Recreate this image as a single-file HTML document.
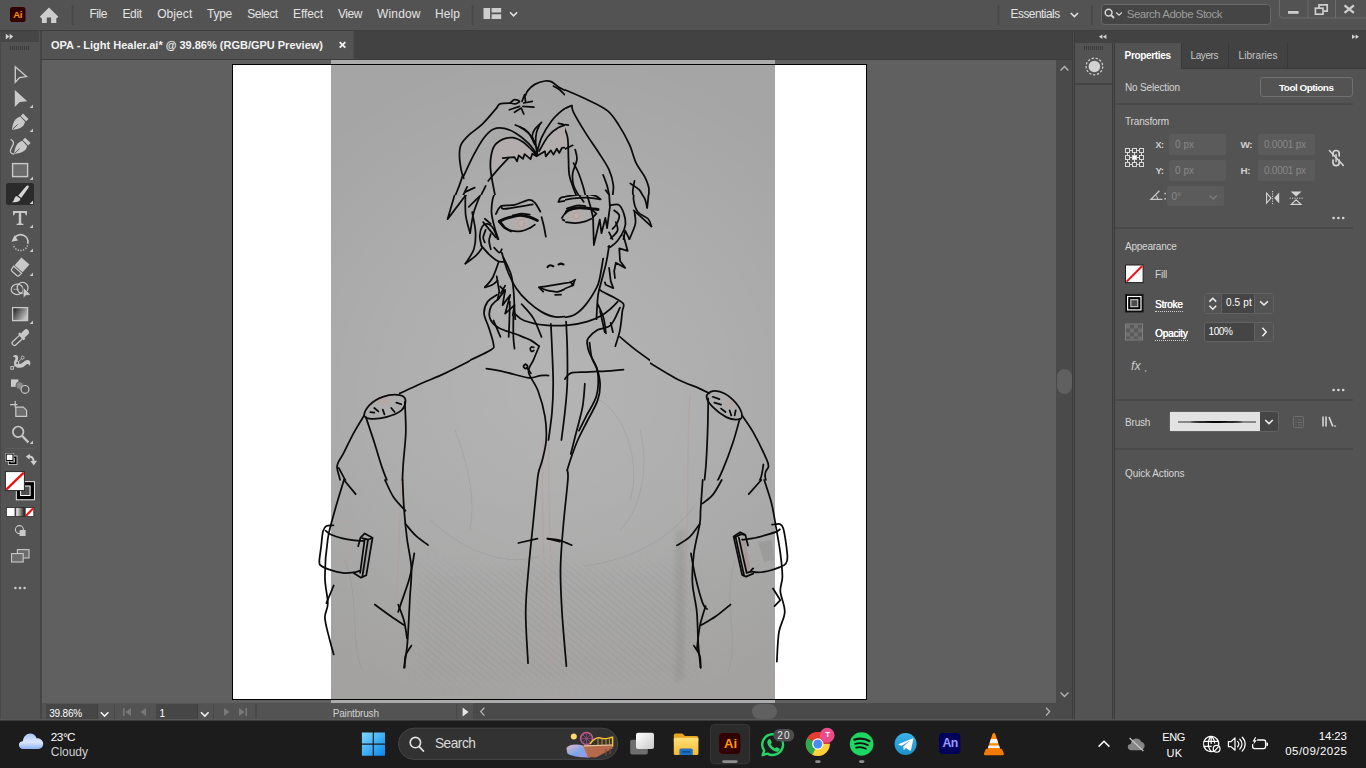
<!DOCTYPE html>
<html lang="en">
<head>
<meta charset="utf-8">
<title>OPA - Light Healer.ai</title>
<style>
*{box-sizing:border-box;margin:0;padding:0}
html,body{width:1366px;height:768px;overflow:hidden;background:#535353}
body{position:relative;font-family:"Liberation Sans",sans-serif;font-size:12px;color:#dcdcdc}
.abs,.b{position:absolute}
.t{position:absolute;z-index:3;white-space:pre;font-family:"Liberation Sans",sans-serif}
svg{position:absolute;left:0;top:0;overflow:visible;z-index:2}
#menubar{left:0;top:0;width:1366px;height:30px;background:#535353}
#menuline{left:0;top:30px;width:1366px;height:1px;background:#3e3e3e}
#tabbar{left:42px;top:31px;width:1032px;height:28px;background:#424242}
#tab{left:42px;top:31px;width:312px;height:28px;background:#535353;border-right:1px solid #4c4c4c}
#tabline{left:40px;top:59px;width:1034px;height:1px;background:#3c3c3c}
#canvas{left:42px;top:60px;width:1014px;height:643px;background:#606060;overflow:hidden}
#lefttool{left:0;top:31px;width:40px;height:689px;background:#535353;border-left:1px solid #484848}
#lefthead{left:1px;top:31px;width:38px;height:11px;background:#464646}
#leftsep{left:40px;top:31px;width:2px;height:689px;background:#454545}
#vscroll{left:1056px;top:60px;width:16px;height:643px;background:#4a4a4a}
#vthumb{left:1057px;top:369px;width:15px;height:25px;background:#606060;border-radius:7.5px}
#hbar{left:42px;top:703px;width:1032px;height:17px;background:#4a4a4a}
#hthumb{left:752px;top:704px;width:25px;height:15px;background:#606060;border-radius:7.5px}
#rdocksep{left:1072px;top:31px;width:3px;height:689px;background:#4e4e4e;border-left:1px solid #3b3b3b;border-right:1px solid #3b3b3b}
#rhead{left:1075px;top:31px;width:291px;height:12px;background:#424242}
#iconcol{left:1075px;top:43px;width:37px;height:677px;background:#535353}
#iconcell{left:1075px;top:83px;width:37px;height:2px;background:#434343}
#iconsep{left:1112px;top:43px;width:3px;height:677px;background:#4e4e4e;border-left:1px solid #3b3b3b;border-right:1px solid #3b3b3b}
#panel{left:1115px;top:43px;width:251px;height:677px;background:#535353}
#ptabs{left:1182px;top:43px;width:184px;height:26px;background:#424242;border-bottom:1px solid #3a3a3a}
.ptab{top:43px;height:25px;background:#424242;border-right:1px solid #383838}
.sep{left:1115px;width:238px;height:2px;background:#4a4a4a}
.inp{background:#5b5b5b;border-radius:2px}
.dk{background:#454545;border:1px solid #626262}
#taskbar{left:0;top:720px;width:1366px;height:48px;background:#1c1c1c;border-top:1px solid #3b3b3b}
#botline{left:0;top:719px;width:1366px;height:1px;background:#585858}
</style>
</head>
<body>
<div id="menubar" class="abs"></div>
<div id="menuline" class="abs"></div>
<div id="tabbar" class="abs"></div>
<div id="tab" class="abs"></div>
<div id="tabline" class="abs"></div>
<div id="canvas" class="abs">
<svg width="1366" height="768" viewBox="0 0 1366 768" style="left:-42px;top:-60px;z-index:0">
<defs><linearGradient id="ph" x1="0" y1="0" x2="0" y2="1"><stop offset="0" stop-color="#a5a5a6"/><stop offset="0.6" stop-color="#a5a5a5"/><stop offset="1" stop-color="#a3a2a1"/></linearGradient><radialGradient id="hl" gradientUnits="userSpaceOnUse" cx="555" cy="390" r="340"><stop offset="0" stop-color="#fff" stop-opacity="0.17"/><stop offset="0.5" stop-color="#fff" stop-opacity="0.10"/><stop offset="1" stop-color="#fff" stop-opacity="0"/></radialGradient></defs>
<rect x="232.5" y="64.5" width="634" height="635" fill="#fff" stroke="#000" stroke-width="1"/>
<rect x="331" y="60" width="444" height="643" fill="#ababab"/>
<rect x="331" y="65" width="444" height="634" fill="url(#ph)"/>
<rect x="331" y="65" width="444" height="634" fill="url(#hl)"/>
<rect x="331" y="64" width="444" height="1" fill="#000"/><rect x="331" y="699" width="444" height="1" fill="#000"/>
<defs><pattern id="hat" width="5" height="5" patternUnits="userSpaceOnUse" patternTransform="rotate(40)"><rect width="5" height="5" fill="none"/><path d="M0 2.5H5" stroke="#7e7e7e" stroke-width="0.7"/></pattern></defs>
<defs><filter id="bl2" x="-100%" y="-10%" width="300%" height="120%"><feGaussianBlur stdDeviation="2.2"/></filter><filter id="bl" x="-20%" y="-20%" width="140%" height="140%"><feGaussianBlur stdDeviation="9"/></filter><mask id="hm" maskUnits="userSpaceOnUse" x="331" y="480" width="444" height="223"><path d="M420 565C470 575 520 572 548 560C600 574 660 572 690 560L688 680L420 680Z" fill="#fff" filter="url(#bl)"/></mask></defs>
<g mask="url(#hm)"><rect x="331" y="500" width="444" height="200" fill="#808080" opacity="0.04"/><rect x="331" y="500" width="444" height="200" fill="url(#hat)" opacity="0.30"/></g>
<path d="M676 530C674 580 677 640 675 680L684 680C686 640 684 580 686 530Z" fill="#7c7c7c" opacity="0.22" filter="url(#bl2)"/>
<g transform="translate(440,70) scale(0.169271)" fill="#c4b2b2" opacity="0.38">
<path d="M300 600L300 520L320 450L370 410L430 400L490 425L540 470L565 500L535 527L500 497L490 525L465 505L455 540L440 515L405 520L340 590Z"/>
<path d="M585 480L640 390L700 340L745 330L760 400L762 455L720 460L705 490L690 465L670 500L655 475L625 510L620 480Z"/>
</g>
<path d="M758 542L772 540L774 560L764 562Z" fill="#8d8d8d" opacity="0.45"/><path d="M741.5 540L745 539.5L751 571L747 572Z" fill="#a08d88" opacity="0.5"/><path d="M367.5 540L371 540.5L365 573L361.5 572Z" fill="#8d8d8d" opacity="0.4"/>
<path d="M332 521.5C338 520 344 520 349 521L347.5 561C342 562 337 562 332 560.5" fill="none" stroke="#b8a3a1" stroke-width="1.3" opacity="0.5"/>
<circle cx="521.3" cy="223.2" r="6.8" fill="#b8acab"/><circle cx="521.3" cy="223.2" r="3.4" fill="#bdb0ae" stroke="#ab9f9e" stroke-width="0.8"/>
<circle cx="576.2" cy="215.6" r="6.5" fill="#b8acab"/><circle cx="576.2" cy="215.6" r="3.2" fill="#bdb0ae" stroke="#ab9f9e" stroke-width="0.8"/>
<ellipse cx="382.8" cy="400.4" rx="6.4" ry="5" fill="#b5a9a8"/><ellipse cx="730.4" cy="403.4" rx="5.4" ry="5.6" fill="#b5a9a8"/>
<g fill="none" stroke="#b59d98" stroke-width="1.3" opacity="0.5"><path d="M543 440C541 520 545 600 550 665M549 440C548 520 552 600 556 665"/><path d="M690 395C686 450 690 520 684 600"/><path d="M402 470C398 520 400 560 396 600"/></g>
<g fill="none" stroke="#8c8c8c" stroke-width="0.9" opacity="0.35"><path d="M430 520C470 556 510 566 540 556"/><path d="M585 566C630 560 670 540 695 505"/><path d="M455 430C470 470 475 500 470 530"/><path d="M640 430C650 470 640 510 620 530"/><path d="M345 560C360 600 350 640 362 670"/><path d="M735 560C722 600 740 640 728 672"/><path d="M600 400C630 420 640 470 630 500"/></g>
<g fill="none" stroke="#0b0b0b" stroke-width="1.75" stroke-linecap="round" stroke-linejoin="round">
<clipPath id="cp0"><rect x="430" y="60" width="135" height="135"/></clipPath>
<g clip-path="url(#cp0)">
<g transform="translate(440,70) scale(0.169271)">
<path vector-effect="non-scaling-stroke" d="M505.0 150.0C507.5 145.0 510.8 130.8 520.0 120.0C529.2 109.2 543.3 94.2 560.0 85.0C576.7 75.8 603.3 67.5 620.0 65.0C636.7 62.5 646.7 64.2 660.0 70.0C673.3 75.8 682.0 89.2 700.0 100.0C718.0 110.8 756.7 129.2 768.0 135.0"/>
<path vector-effect="non-scaling-stroke" d="M670.0 95.0C675.8 98.3 694.2 106.7 705.0 115.0C715.8 123.3 730.0 140.0 735.0 145.0"/>
<path vector-effect="non-scaling-stroke" d="M420.0 195.0C409.2 195.8 370.0 194.2 355.0 200.0C340.0 205.8 347.5 210.0 330.0 230.0C312.5 250.0 276.7 294.2 250.0 320.0C223.3 345.8 190.8 365.0 170.0 385.0C149.2 405.0 134.2 420.8 125.0 440.0C115.8 459.2 115.0 475.0 115.0 500.0C115.0 525.0 120.8 566.7 125.0 590.0C129.2 613.3 137.5 631.7 140.0 640.0"/>
<path vector-effect="non-scaling-stroke" d="M135.0 620.0C131.7 630.0 121.7 661.7 115.0 680.0C108.3 698.3 100.8 715.3 95.0 730.0C89.2 744.7 82.5 761.7 80.0 768.0"/>
<path vector-effect="non-scaling-stroke" d="M140.0 625.0C150.0 604.2 180.0 537.5 200.0 500.0C220.0 462.5 240.8 425.0 260.0 400.0C279.2 375.0 295.0 359.2 315.0 350.0C335.0 340.8 357.5 340.8 380.0 345.0C402.5 349.2 426.7 360.8 450.0 375.0C473.3 389.2 501.7 412.5 520.0 430.0C538.3 447.5 551.7 467.5 560.0 480.0C568.3 492.5 568.3 500.8 570.0 505.0"/>
<path vector-effect="non-scaling-stroke" d="M325.0 740.0C320.8 716.7 304.2 636.7 300.0 600.0C295.8 563.3 296.7 545.0 300.0 520.0C303.3 495.0 308.3 468.3 320.0 450.0C331.7 431.7 351.7 418.3 370.0 410.0C388.3 401.7 410.0 397.5 430.0 400.0C450.0 402.5 471.7 413.3 490.0 425.0C508.3 436.7 527.5 457.5 540.0 470.0C552.5 482.5 560.8 495.0 565.0 500.0"/>
<path vector-effect="non-scaling-stroke" d="M285.0 655.0C294.2 644.2 320.0 612.5 340.0 590.0C360.0 567.5 394.2 531.7 405.0 520.0"/>
<path vector-effect="non-scaling-stroke" d="M270.0 685.0C266.7 691.7 256.7 711.2 250.0 725.0C243.3 738.8 233.3 760.8 230.0 768.0"/>
<path vector-effect="non-scaling-stroke" d="M370.0 520.0 L440.0 515.0 L455.0 540.0 L465.0 505.0 L490.0 525.0 L500.0 497.0 L535.0 527.0 L545.0 495.0 L570.0 510.0 L620.0 480.0 L625.0 510.0 L655.0 475.0 L670.0 500.0 L690.0 465.0 L705.0 490.0 L720.0 460.0 L768.0 455.0"/>
<path vector-effect="non-scaling-stroke" d="M485.0 185.0 L500.0 145.0 L505.0 185.0"/>
<path vector-effect="non-scaling-stroke" d="M410.0 235.0 L470.0 215.0"/>
<path vector-effect="non-scaling-stroke" d="M440.0 250.0 L480.0 225.0 L495.0 260.0"/>
<path vector-effect="non-scaling-stroke" d="M490.0 215.0 L555.0 220.0"/>
<path vector-effect="non-scaling-stroke" d="M495.0 195.0 L545.0 185.0"/>
<path vector-effect="non-scaling-stroke" d="M415.0 195.0C419.2 191.7 430.8 176.7 440.0 175.0C449.2 173.3 469.2 180.8 470.0 185.0C470.8 189.2 454.2 198.3 445.0 200.0C435.8 201.7 420.0 195.8 415.0 195.0"/>
<path vector-effect="non-scaling-stroke" d="M445.0 325.0C454.2 329.2 483.3 337.5 500.0 350.0C516.7 362.5 532.5 380.0 545.0 400.0C557.5 420.0 570.0 458.3 575.0 470.0"/>
<path vector-effect="non-scaling-stroke" d="M470.0 335.0C479.2 341.7 510.0 357.5 525.0 375.0C540.0 392.5 554.2 429.2 560.0 440.0"/>
<path vector-effect="non-scaling-stroke" d="M600.0 310.0C593.3 316.7 569.2 336.7 560.0 350.0C550.8 363.3 545.8 378.3 545.0 390.0C544.2 401.7 553.3 415.0 555.0 420.0"/>
<path vector-effect="non-scaling-stroke" d="M590.0 320.0C586.7 328.3 574.2 351.7 570.0 370.0C565.8 388.3 564.2 408.3 565.0 430.0C565.8 451.7 573.3 488.3 575.0 500.0"/>
<path vector-effect="non-scaling-stroke" d="M570.0 500.0C575.0 483.3 585.0 433.3 600.0 400.0C615.0 366.7 640.0 326.7 660.0 300.0C680.0 273.3 702.0 255.0 720.0 240.0C738.0 225.0 760.0 215.0 768.0 210.0"/>
<path vector-effect="non-scaling-stroke" d="M585.0 480.0C594.2 465.0 620.8 413.3 640.0 390.0C659.2 366.7 680.0 351.7 700.0 340.0C720.0 328.3 750.0 323.3 760.0 320.0"/>
<path vector-effect="non-scaling-stroke" d="M700.0 315.0C705.0 316.2 722.5 319.5 730.0 322.0C737.5 324.5 742.5 328.7 745.0 330.0"/>
<path vector-effect="non-scaling-stroke" d="M160.0 690.0 L125.0 768.0"/>
<path vector-effect="non-scaling-stroke" d="M150.0 720.0 L205.0 695.0"/>
</g></g>
<clipPath id="cp1"><rect x="565" y="60" width="140" height="135"/></clipPath>
<g clip-path="url(#cp1)">
<g transform="translate(560,70) scale(0.169271)">
<path vector-effect="non-scaling-stroke" d="M0.0 105.0C25.0 115.8 103.3 147.5 150.0 170.0C196.7 192.5 246.7 213.3 280.0 240.0C313.3 266.7 328.3 296.7 350.0 330.0C371.7 363.3 393.3 403.3 410.0 440.0C426.7 476.7 435.0 518.3 450.0 550.0C465.0 581.7 487.5 605.0 500.0 630.0C512.5 655.0 521.7 677.0 525.0 700.0C528.3 723.0 520.8 756.7 520.0 768.0"/>
<path vector-effect="non-scaling-stroke" d="M0.0 115.0 L25.0 140.0"/>
<path vector-effect="non-scaling-stroke" d="M0.0 240.0C6.7 237.0 28.3 227.0 40.0 222.0C51.7 217.0 65.0 212.0 70.0 210.0"/>
<path vector-effect="non-scaling-stroke" d="M70.0 210.0C71.7 216.7 66.7 223.3 80.0 250.0C93.3 276.7 125.0 330.0 150.0 370.0C175.0 410.0 206.7 453.3 230.0 490.0C253.3 526.7 275.8 558.3 290.0 590.0C304.2 621.7 311.7 653.3 315.0 680.0C318.3 706.7 310.8 738.3 310.0 750.0"/>
<path vector-effect="non-scaling-stroke" d="M0.0 320.0 L50.0 325.0"/>
<path vector-effect="non-scaling-stroke" d="M20.0 330.0C24.2 341.7 40.0 368.3 45.0 400.0C50.0 431.7 48.3 483.3 50.0 520.0C51.7 556.7 50.0 590.0 55.0 620.0C60.0 650.0 72.5 678.3 80.0 700.0C87.5 721.7 96.7 741.7 100.0 750.0"/>
<path vector-effect="non-scaling-stroke" d="M0.0 480.0 L75.0 445.0"/>
<path vector-effect="non-scaling-stroke" d="M90.0 470.0C91.7 480.0 102.5 506.7 100.0 530.0C97.5 553.3 78.3 585.0 75.0 610.0C71.7 635.0 74.2 658.3 80.0 680.0C85.8 701.7 105.0 730.0 110.0 740.0"/>
<path vector-effect="non-scaling-stroke" d="M80.0 550.0C85.0 560.0 100.0 585.0 110.0 610.0C120.0 635.0 132.5 673.7 140.0 700.0C147.5 726.3 152.5 756.7 155.0 768.0"/>
<path vector-effect="non-scaling-stroke" d="M255.0 620.0C259.2 631.7 273.3 665.3 280.0 690.0C286.7 714.7 292.5 755.0 295.0 768.0"/>
<path vector-effect="non-scaling-stroke" d="M270.0 710.0 L300.0 750.0"/>
<path vector-effect="non-scaling-stroke" d="M440.0 655.0C438.3 665.8 430.0 701.2 430.0 720.0C430.0 738.8 438.3 760.0 440.0 768.0"/>
<path vector-effect="non-scaling-stroke" d="M415.0 670.0C424.2 676.7 455.8 693.7 470.0 710.0C484.2 726.3 495.0 758.3 500.0 768.0"/>
</g></g>
<clipPath id="cp2"><rect x="430" y="195" width="135" height="125"/></clipPath>
<g clip-path="url(#cp2)">
<g transform="translate(440,190) scale(0.169271)">
<path vector-effect="non-scaling-stroke" d="M95.0 0.0 L45.0 172.0 L160.0 20.0"/>
<path vector-effect="non-scaling-stroke" d="M150.0 20.0C150.3 41.7 147.3 110.8 152.0 150.0C156.7 189.2 173.7 237.5 178.0 255.0"/>
<path vector-effect="non-scaling-stroke" d="M178.0 255.0C181.7 234.2 188.0 172.5 200.0 130.0C212.0 87.5 241.7 21.7 250.0 0.0"/>
<path vector-effect="non-scaling-stroke" d="M170.0 100.0 L230.0 40.0"/>
<path vector-effect="non-scaling-stroke" d="M190.0 130.0C193.3 150.0 208.3 213.3 210.0 250.0C211.7 286.7 210.0 319.2 200.0 350.0C190.0 380.8 158.3 420.8 150.0 435.0"/>
<path vector-effect="non-scaling-stroke" d="M150.0 435.0C160.8 426.7 198.3 400.8 215.0 385.0C231.7 369.2 244.2 347.5 250.0 340.0"/>
<path vector-effect="non-scaling-stroke" d="M265.0 170.0 L300.0 200.0"/>
<path vector-effect="non-scaling-stroke" d="M255.0 190.0 L330.0 280.0"/>
<path vector-effect="non-scaling-stroke" d="M245.0 330.0C243.3 320.0 234.2 289.2 235.0 270.0C235.8 250.8 242.5 226.7 250.0 215.0C257.5 203.3 270.0 199.2 280.0 200.0C290.0 200.8 301.7 210.0 310.0 220.0C318.3 230.0 325.0 248.3 330.0 260.0C335.0 271.7 338.3 285.0 340.0 290.0"/>
<path vector-effect="non-scaling-stroke" d="M270.0 235.0C267.5 242.5 255.8 267.5 255.0 280.0C254.2 292.5 263.3 305.0 265.0 310.0"/>
<path vector-effect="non-scaling-stroke" d="M300.0 260.0C298.3 266.7 290.0 285.0 290.0 300.0C290.0 315.0 298.3 341.7 300.0 350.0"/>
<path vector-effect="non-scaling-stroke" d="M245.0 330.0C252.5 338.3 274.2 365.0 290.0 380.0C305.8 395.0 325.8 412.5 340.0 420.0C354.2 427.5 369.2 424.2 375.0 425.0"/>
<path vector-effect="non-scaling-stroke" d="M320.0 340.0C325.0 345.0 342.5 368.3 350.0 370.0C357.5 371.7 362.5 353.3 365.0 350.0"/>
<path vector-effect="non-scaling-stroke" d="M330.0 0.0C326.7 10.0 314.2 36.7 310.0 60.0C305.8 83.3 302.5 111.7 305.0 140.0C307.5 168.3 318.3 205.0 325.0 230.0C331.7 255.0 341.7 280.0 345.0 290.0"/>
<path vector-effect="non-scaling-stroke" d="M365.0 370.0C370.8 388.3 385.8 445.0 400.0 480.0C414.2 515.0 430.0 550.0 450.0 580.0C470.0 610.0 495.0 636.7 520.0 660.0C545.0 683.3 573.3 705.0 600.0 720.0C626.7 735.0 652.0 745.8 680.0 750.0C708.0 754.2 753.3 745.8 768.0 745.0"/>
<path vector-effect="non-scaling-stroke" d="M375.0 400.0C382.5 416.7 410.0 466.7 420.0 500.0C430.0 533.3 431.7 566.7 435.0 600.0C438.3 633.3 438.3 672.0 440.0 700.0C441.7 728.0 444.2 756.7 445.0 768.0"/>
<path vector-effect="non-scaling-stroke" d="M345.0 430.0C339.2 445.0 323.3 495.8 310.0 520.0C296.7 544.2 272.5 565.8 265.0 575.0"/>
<path vector-effect="non-scaling-stroke" d="M265.0 575.0C272.5 572.5 297.5 566.7 310.0 560.0C322.5 553.3 335.0 539.2 340.0 535.0"/>
<path vector-effect="non-scaling-stroke" d="M335.0 510.0 L350.0 600.0 L340.0 650.0 L385.0 590.0 L370.0 680.0 L415.0 620.0 L385.0 730.0 L440.0 680.0 L430.0 740.0"/>
<path vector-effect="non-scaling-stroke" d="M355.0 570.0 L385.0 600.0"/>
<path vector-effect="non-scaling-stroke" d="M360.0 610.0 L385.0 565.0"/>
<path vector-effect="non-scaling-stroke" d="M330.0 142.0C335.3 134.2 343.7 104.0 362.0 95.0C380.3 86.0 412.8 94.2 440.0 88.0C467.2 81.8 505.0 60.2 525.0 58.0C545.0 55.8 548.7 63.3 560.0 75.0C571.3 86.7 587.5 119.2 593.0 128.0"/>
<path vector-effect="non-scaling-stroke" d="M362.0 95.0C364.2 97.8 358.7 111.2 375.0 112.0C391.3 112.8 431.2 104.5 460.0 100.0C488.8 95.5 533.3 87.5 548.0 85.0"/>
<path vector-effect="non-scaling-stroke" stroke-width="2.9" d="M350.0 185.0C358.3 181.7 380.0 170.8 400.0 165.0C420.0 159.2 448.3 150.8 470.0 150.0C491.7 149.2 512.5 155.0 530.0 160.0C547.5 165.0 567.5 176.7 575.0 180.0"/>
<path vector-effect="non-scaling-stroke" d="M430.0 150.0C438.3 148.3 463.3 140.8 480.0 140.0C496.7 139.2 521.7 144.2 530.0 145.0"/>
<path vector-effect="non-scaling-stroke" d="M375.0 215.0C382.5 219.2 402.5 235.3 420.0 240.0C437.5 244.7 461.7 245.5 480.0 243.0C498.3 240.5 516.7 231.3 530.0 225.0C543.3 218.7 555.0 208.3 560.0 205.0"/>
<path vector-effect="non-scaling-stroke" stroke-width="2.9" d="M350.0 185.0 L375.0 215.0"/>
<path vector-effect="non-scaling-stroke" d="M380.0 225.0 L420.0 245.0"/>
<path vector-effect="non-scaling-stroke" d="M600.0 160.0C602.5 170.0 610.8 200.8 615.0 220.0C619.2 239.2 623.3 265.8 625.0 275.0"/>
<path vector-effect="non-scaling-stroke" stroke-width="2.1" d="M635.0 455.0C637.5 453.3 644.2 445.8 650.0 445.0C655.8 444.2 666.7 449.2 670.0 450.0"/>
<path vector-effect="non-scaling-stroke" stroke-width="2.1" d="M700.0 440.0C702.5 439.2 710.0 435.0 715.0 435.0C720.0 435.0 727.5 439.2 730.0 440.0"/>
<path vector-effect="non-scaling-stroke" d="M585.0 575.0C595.8 573.3 619.5 570.0 650.0 565.0C680.5 560.0 748.3 548.3 768.0 545.0"/>
<path vector-effect="non-scaling-stroke" d="M585.0 575.0 L610.0 600.0"/>
<path vector-effect="non-scaling-stroke" d="M600.0 580.0C606.7 582.5 623.3 591.7 640.0 595.0C656.7 598.3 678.7 604.2 700.0 600.0C721.3 595.8 756.7 575.0 768.0 570.0"/>
<path vector-effect="non-scaling-stroke" d="M680.0 620.0 L715.0 618.0"/>
<path vector-effect="non-scaling-stroke" d="M700.0 70.0C702.5 65.8 703.7 50.0 715.0 45.0C726.3 40.0 759.2 40.8 768.0 40.0"/>
<path vector-effect="non-scaling-stroke" d="M700.0 70.0 L768.0 60.0"/>
<path vector-effect="non-scaling-stroke" d="M720.0 165.0C724.2 159.2 737.0 137.5 745.0 130.0C753.0 122.5 764.2 121.7 768.0 120.0"/>
<path vector-effect="non-scaling-stroke" d="M725.0 175.0 L768.0 195.0"/>
</g></g>
<clipPath id="cp3"><rect x="565" y="195" width="140" height="125"/></clipPath>
<g clip-path="url(#cp3)">
<g transform="translate(560,190) scale(0.169271)">
<path vector-effect="non-scaling-stroke" d="M0.0 45.0C10.0 43.3 35.0 38.3 60.0 35.0C85.0 31.7 125.0 25.0 150.0 25.0C175.0 25.0 195.0 30.0 210.0 35.0C225.0 40.0 235.0 51.7 240.0 55.0"/>
<path vector-effect="non-scaling-stroke" d="M0.0 65.0C13.3 62.5 53.3 53.3 80.0 50.0C106.7 46.7 134.2 44.2 160.0 45.0C185.8 45.8 222.5 53.3 235.0 55.0"/>
<path vector-effect="non-scaling-stroke" stroke-width="2.9" d="M10.0 155.0C16.7 149.2 33.3 128.3 50.0 120.0C66.7 111.7 88.3 106.7 110.0 105.0C131.7 103.3 160.8 108.3 180.0 110.0C199.2 111.7 217.5 114.2 225.0 115.0"/>
<path vector-effect="non-scaling-stroke" d="M40.0 110.0C50.0 107.0 81.7 94.5 100.0 92.0C118.3 89.5 141.7 94.5 150.0 95.0"/>
<path vector-effect="non-scaling-stroke" d="M35.0 190.0C44.2 190.8 70.8 195.8 90.0 195.0C109.2 194.2 134.2 189.2 150.0 185.0C165.8 180.8 179.2 172.5 185.0 170.0"/>
<path vector-effect="non-scaling-stroke" d="M180.0 110.0 L215.0 140.0 L195.0 160.0"/>
<path vector-effect="non-scaling-stroke" d="M95.0 0.0C99.2 6.7 112.5 28.3 120.0 40.0C127.5 51.7 136.7 65.0 140.0 70.0"/>
<path vector-effect="non-scaling-stroke" d="M150.0 0.0C154.2 13.3 167.5 53.3 175.0 80.0C182.5 106.7 191.7 146.7 195.0 160.0"/>
<path vector-effect="non-scaling-stroke" d="M195.0 160.0 L200.0 325.0 L235.0 175.0 L245.0 255.0 L268.0 165.0 L278.0 225.0 L295.0 100.0 L290.0 20.0"/>
<path vector-effect="non-scaling-stroke" d="M300.0 90.0C308.3 90.0 335.8 76.7 350.0 90.0C364.2 103.3 380.0 146.7 385.0 170.0C390.0 193.3 387.5 208.3 380.0 230.0C372.5 251.7 353.3 282.5 340.0 300.0C326.7 317.5 309.2 329.2 300.0 335.0C290.8 340.8 287.5 335.0 285.0 335.0"/>
<path vector-effect="non-scaling-stroke" d="M320.0 120.0C325.0 125.0 347.5 136.7 350.0 150.0C352.5 163.3 341.7 186.7 335.0 200.0C328.3 213.3 314.2 225.0 310.0 230.0"/>
<path vector-effect="non-scaling-stroke" d="M330.0 190.0C331.7 198.3 345.0 224.2 340.0 240.0C335.0 255.8 306.7 277.5 300.0 285.0"/>
<path vector-effect="non-scaling-stroke" d="M290.0 250.0 L310.0 290.0"/>
<path vector-effect="non-scaling-stroke" d="M440.0 0.0C439.2 10.0 431.7 38.3 435.0 60.0C438.3 81.7 445.8 111.7 460.0 130.0C474.2 148.3 506.7 155.8 520.0 170.0C533.3 184.2 536.7 207.5 540.0 215.0"/>
<path vector-effect="non-scaling-stroke" d="M540.0 215.0C530.0 205.8 497.5 175.8 480.0 160.0C462.5 144.2 442.5 126.7 435.0 120.0"/>
<path vector-effect="non-scaling-stroke" d="M440.0 130.0C440.8 141.7 450.0 173.3 445.0 200.0C440.0 226.7 415.8 275.0 410.0 290.0"/>
<path vector-effect="non-scaling-stroke" d="M410.0 290.0 L385.0 240.0 L375.0 290.0"/>
<path vector-effect="non-scaling-stroke" d="M375.0 270.0 L400.0 360.0 L350.0 345.0 L355.0 420.0 L385.0 460.0 L330.0 430.0 L320.0 480.0 L325.0 520.0"/>
<path vector-effect="non-scaling-stroke" d="M290.0 460.0 L300.0 540.0 L315.0 580.0 L270.0 560.0 L265.0 545.0"/>
<path vector-effect="non-scaling-stroke" d="M465.0 0.0C470.8 8.3 491.7 32.5 500.0 50.0C508.3 67.5 512.5 95.8 515.0 105.0"/>
<path vector-effect="non-scaling-stroke" d="M525.0 0.0C524.2 10.0 521.7 42.5 520.0 60.0C518.3 77.5 515.8 97.5 515.0 105.0"/>
<path vector-effect="non-scaling-stroke" d="M255.0 405.0C251.7 424.2 241.7 490.8 235.0 520.0C228.3 549.2 229.2 553.3 215.0 580.0C200.8 606.7 172.5 653.3 150.0 680.0C127.5 706.7 105.0 727.5 80.0 740.0C55.0 752.5 13.3 752.5 0.0 755.0"/>
<path vector-effect="non-scaling-stroke" d="M290.0 330.0C287.5 345.0 281.7 388.3 275.0 420.0C268.3 451.7 258.3 486.7 250.0 520.0C241.7 553.3 230.8 578.7 225.0 620.0C219.2 661.3 216.7 743.3 215.0 768.0"/>
<path vector-effect="non-scaling-stroke" d="M0.0 555.0C10.0 553.3 45.0 549.2 60.0 545.0C75.0 540.8 85.0 532.5 90.0 530.0"/>
<path vector-effect="non-scaling-stroke" d="M65.0 545.0 L75.0 565.0 L85.0 540.0"/>
<path vector-effect="non-scaling-stroke" d="M80.0 560.0C76.7 561.7 73.3 564.2 60.0 570.0C46.7 575.8 10.0 590.8 0.0 595.0"/>
<path vector-effect="non-scaling-stroke" d="M0.0 435.0 L20.0 440.0"/>
</g></g>
<clipPath id="cp4"><rect x="470" y="288" width="180" height="183"/></clipPath>
<g clip-path="url(#cp4)">
<g transform="translate(470,290) scale(0.234375)">
<path vector-effect="non-scaling-stroke" d="M115.0 20.0C108.3 25.0 84.2 36.7 75.0 50.0C65.8 63.3 59.2 81.7 60.0 100.0C60.8 118.3 73.3 138.3 80.0 160.0C86.7 181.7 98.3 214.2 100.0 230.0C101.7 245.8 106.7 243.3 90.0 255.0C73.3 266.7 15.0 292.5 0.0 300.0"/>
<path vector-effect="non-scaling-stroke" d="M125.0 35.0C119.2 40.8 96.7 55.8 90.0 70.0C83.3 84.2 80.0 105.0 85.0 120.0C90.0 135.0 100.8 148.3 120.0 160.0C139.2 171.7 176.7 180.8 200.0 190.0C223.3 199.2 244.2 206.7 260.0 215.0C275.8 223.3 289.2 235.8 295.0 240.0"/>
<path vector-effect="non-scaling-stroke" d="M295.0 240.0C290.8 250.0 277.5 281.7 270.0 300.0C262.5 318.3 246.7 328.3 250.0 350.0C253.3 371.7 278.3 398.3 290.0 430.0C301.7 461.7 314.2 505.0 320.0 540.0C325.8 575.0 326.7 610.0 325.0 640.0C323.3 670.0 315.0 698.7 310.0 720.0C305.0 741.3 297.5 760.0 295.0 768.0"/>
<path vector-effect="non-scaling-stroke" d="M100.0 130.0 L130.0 200.0"/>
<path vector-effect="non-scaling-stroke" d="M185.0 110.0C185.0 125.0 184.2 176.7 185.0 200.0C185.8 223.3 189.2 241.7 190.0 250.0"/>
<path vector-effect="non-scaling-stroke" d="M170.0 50.0C169.7 63.3 168.8 105.0 168.0 130.0C167.2 155.0 165.5 188.3 165.0 200.0"/>
<path vector-effect="non-scaling-stroke" d="M190.0 100.0C196.7 105.0 208.3 121.7 230.0 130.0C251.7 138.3 288.3 146.7 320.0 150.0C351.7 153.3 390.0 152.5 420.0 150.0C450.0 147.5 476.7 141.7 500.0 135.0C523.3 128.3 543.3 119.2 560.0 110.0C576.7 100.8 588.3 90.0 600.0 80.0C611.7 70.0 625.0 55.0 630.0 50.0"/>
<path vector-effect="non-scaling-stroke" d="M555.0 0.0C557.5 1.7 559.2 4.2 570.0 10.0C580.8 15.8 605.8 26.7 620.0 35.0C634.2 43.3 650.0 50.8 655.0 60.0C660.0 69.2 652.5 71.7 650.0 90.0C647.5 108.3 645.0 145.0 640.0 170.0C635.0 195.0 623.3 228.3 620.0 240.0"/>
<path vector-effect="non-scaling-stroke" d="M640.0 200.0C650.0 208.3 678.7 233.3 700.0 250.0C721.3 266.7 756.7 291.7 768.0 300.0"/>
<path vector-effect="non-scaling-stroke" d="M70.0 335.0C83.3 337.5 120.0 343.3 150.0 350.0C180.0 356.7 225.0 372.5 250.0 375.0C275.0 377.5 285.8 366.7 300.0 365.0C314.2 363.3 329.2 365.0 335.0 365.0"/>
<path vector-effect="non-scaling-stroke" d="M405.0 380.0C409.2 375.8 414.2 360.0 430.0 355.0C445.8 350.0 471.7 351.7 500.0 350.0C528.3 348.3 574.2 346.7 600.0 345.0C625.8 343.3 645.8 340.8 655.0 340.0"/>
<path vector-effect="non-scaling-stroke" d="M272.0 245.0C270.3 244.7 264.5 241.8 262.0 243.0C259.5 244.2 256.8 248.8 257.0 252.0C257.2 255.2 260.5 261.0 263.0 262.0C265.5 263.0 270.5 258.7 272.0 258.0"/>
<path vector-effect="non-scaling-stroke" d="M237.0 316.0C235.5 317.5 228.0 321.8 228.0 325.0C228.0 328.2 234.0 335.0 237.0 335.0C240.0 335.0 246.0 328.2 246.0 325.0C246.0 321.8 238.5 317.5 237.0 316.0"/>
<path vector-effect="non-scaling-stroke" d="M245.0 335.0 L260.0 355.0"/>
<path vector-effect="non-scaling-stroke" d="M345.0 145.0C345.8 162.5 348.3 207.5 350.0 250.0C351.7 292.5 355.0 355.0 355.0 400.0C355.0 445.0 353.3 480.0 350.0 520.0C346.7 560.0 337.5 620.0 335.0 640.0"/>
<path vector-effect="non-scaling-stroke" d="M410.0 135.0C410.8 154.2 414.2 205.8 415.0 250.0C415.8 294.2 416.7 355.0 415.0 400.0C413.3 445.0 409.2 480.0 405.0 520.0C400.8 560.0 392.5 620.0 390.0 640.0"/>
<path vector-effect="non-scaling-stroke" d="M640.0 75.0C633.3 87.5 615.8 134.2 600.0 150.0C584.2 165.8 560.8 160.8 545.0 170.0C529.2 179.2 512.5 195.0 505.0 205.0C497.5 215.0 499.2 219.2 500.0 230.0C500.8 240.8 503.3 253.3 510.0 270.0C516.7 286.7 532.5 308.3 540.0 330.0C547.5 351.7 554.2 376.7 555.0 400.0C555.8 423.3 554.2 443.3 545.0 470.0C535.8 496.7 514.2 531.7 500.0 560.0C485.8 588.3 471.7 613.3 460.0 640.0C448.3 666.7 437.5 698.7 430.0 720.0C422.5 741.3 417.5 760.0 415.0 768.0"/>
<path vector-effect="non-scaling-stroke" d="M510.0 225.0C511.7 235.8 514.2 269.2 520.0 290.0C525.8 310.8 541.7 323.3 545.0 350.0C548.3 376.7 548.3 418.3 540.0 450.0C531.7 481.7 507.5 515.0 495.0 540.0C482.5 565.0 470.0 590.0 465.0 600.0"/>
<path vector-effect="non-scaling-stroke" d="M490.0 400.0C488.3 416.7 486.7 463.3 480.0 500.0C473.3 536.7 458.3 586.7 450.0 620.0C441.7 653.3 433.3 686.7 430.0 700.0"/>
<path vector-effect="non-scaling-stroke" d="M545.0 60.0C549.2 70.0 564.2 99.2 570.0 120.0C575.8 140.8 578.3 174.2 580.0 185.0"/>
<path vector-effect="non-scaling-stroke" d="M555.0 90.0 L575.0 180.0"/>
<path vector-effect="non-scaling-stroke" d="M600.0 140.0 L610.0 180.0"/>
<path vector-effect="non-scaling-stroke" d="M220.0 60.0C228.3 70.0 255.8 96.7 270.0 120.0C284.2 143.3 299.2 186.7 305.0 200.0"/>
</g></g>
<clipPath id="cp5"><rect x="300" y="280" width="170" height="200.5"/></clipPath>
<g clip-path="url(#cp5)">
<g transform="translate(310,280) scale(0.338542)">
<path vector-effect="non-scaling-stroke" d="M480.0 235.0C466.7 241.7 425.0 263.3 400.0 275.0C375.0 286.7 352.5 295.0 330.0 305.0C307.5 315.0 275.8 330.0 265.0 335.0"/>
<path vector-effect="non-scaling-stroke" d="M160.0 400.0C159.2 393.3 165.8 379.2 175.0 370.0C184.2 360.8 200.0 350.0 215.0 345.0C230.0 340.0 253.8 338.3 265.0 340.0C276.2 341.7 281.2 347.5 282.0 355.0C282.8 362.5 279.5 376.7 270.0 385.0C260.5 393.3 240.0 400.8 225.0 405.0C210.0 409.2 190.8 410.8 180.0 410.0C169.2 409.2 160.8 406.7 160.0 400.0Z"/>
<path vector-effect="non-scaling-stroke" d="M190.0 378.0 L202.0 388.0"/>
<path vector-effect="non-scaling-stroke" d="M215.0 383.0 L220.0 397.0"/>
<path vector-effect="non-scaling-stroke" d="M240.0 378.0 L250.0 390.0"/>
<path vector-effect="non-scaling-stroke" d="M255.0 362.0 L270.0 367.0"/>
<path vector-effect="non-scaling-stroke" d="M178.0 390.0 L190.0 392.0"/>
<path vector-effect="non-scaling-stroke" d="M160.0 400.0C155.0 408.3 140.0 431.7 130.0 450.0C120.0 468.3 108.3 493.3 100.0 510.0C91.7 526.7 81.7 535.0 80.0 550.0C78.3 565.0 89.2 578.3 90.0 600.0C90.8 621.7 88.3 652.0 85.0 680.0C81.7 708.0 72.5 753.3 70.0 768.0"/>
<path vector-effect="non-scaling-stroke" d="M165.0 405.0C169.2 417.5 181.7 454.2 190.0 480.0C198.3 505.8 205.8 535.0 215.0 560.0C224.2 585.0 233.3 608.3 245.0 630.0C256.7 651.7 278.3 680.0 285.0 690.0"/>
<path vector-effect="non-scaling-stroke" d="M280.0 360.0C280.5 375.0 283.8 418.3 283.0 450.0C282.2 481.7 276.7 518.3 275.0 550.0C273.3 581.7 271.3 611.7 273.0 640.0C274.7 668.3 280.5 698.7 285.0 720.0C289.5 741.3 297.5 760.0 300.0 768.0"/>
<path vector-effect="non-scaling-stroke" d="M85.0 555.0C89.2 562.5 101.2 587.2 110.0 600.0C118.8 612.8 133.3 626.7 138.0 632.0"/>
<path vector-effect="non-scaling-stroke" d="M70.0 720.0C65.0 721.7 45.8 722.0 40.0 730.0C34.2 738.0 35.8 761.7 35.0 768.0"/>
<path vector-effect="non-scaling-stroke" d="M45.0 740.0 L150.0 765.0"/>
<path vector-effect="non-scaling-stroke" d="M150.0 750.0 L175.0 745.0 L180.0 768.0"/>
</g></g>
<clipPath id="cp6"><rect x="650" y="280" width="160" height="200.5"/></clipPath>
<g clip-path="url(#cp6)">
<g transform="translate(540,280) scale(0.338542)">
<path vector-effect="non-scaling-stroke" d="M300.0 230.0C316.7 240.0 371.7 275.0 400.0 290.0C428.3 305.0 453.3 312.5 470.0 320.0C486.7 327.5 495.0 332.5 500.0 335.0"/>
<path vector-effect="non-scaling-stroke" d="M492.0 345.0C492.0 337.2 501.2 329.7 510.0 328.0C518.8 326.3 533.3 328.8 545.0 335.0C556.7 341.2 571.3 354.2 580.0 365.0C588.7 375.8 596.2 392.2 597.0 400.0C597.8 407.8 592.8 411.2 585.0 412.0C577.2 412.8 562.5 411.2 550.0 405.0C537.5 398.8 519.7 385.0 510.0 375.0C500.3 365.0 492.0 352.8 492.0 345.0Z"/>
<path vector-effect="non-scaling-stroke" d="M510.0 345.0 L530.0 352.0"/>
<path vector-effect="non-scaling-stroke" d="M515.0 362.0 L535.0 368.0"/>
<path vector-effect="non-scaling-stroke" d="M535.0 380.0 L548.0 390.0"/>
<path vector-effect="non-scaling-stroke" d="M560.0 385.0 L565.0 400.0"/>
<path vector-effect="non-scaling-stroke" d="M578.0 385.0 L575.0 400.0"/>
<path vector-effect="non-scaling-stroke" d="M597.0 400.0C602.5 408.3 618.7 430.0 630.0 450.0C641.3 470.0 657.5 503.3 665.0 520.0C672.5 536.7 675.0 540.0 675.0 550.0C675.0 560.0 662.5 558.3 665.0 580.0C667.5 601.7 684.2 648.7 690.0 680.0C695.8 711.3 698.3 753.3 700.0 768.0"/>
<path vector-effect="non-scaling-stroke" d="M660.0 545.0C658.3 552.5 657.0 575.5 650.0 590.0C643.0 604.5 623.3 625.0 618.0 632.0"/>
<path vector-effect="non-scaling-stroke" d="M497.0 350.0C496.7 366.7 496.2 416.7 495.0 450.0C493.8 483.3 492.5 518.3 490.0 550.0C487.5 581.7 483.3 611.7 480.0 640.0C476.7 668.3 472.5 698.7 470.0 720.0C467.5 741.3 465.8 760.0 465.0 768.0"/>
<path vector-effect="non-scaling-stroke" d="M590.0 410.0C586.7 421.7 578.3 455.0 570.0 480.0C561.7 505.0 550.0 536.7 540.0 560.0C530.0 583.3 520.0 603.3 510.0 620.0C500.0 636.7 485.0 653.3 480.0 660.0"/>
<path vector-effect="non-scaling-stroke" d="M700.0 720.0C702.5 722.5 711.7 727.0 715.0 735.0C718.3 743.0 719.2 762.5 720.0 768.0"/>
<path vector-effect="non-scaling-stroke" d="M580.0 750.0 L600.0 745.0 L610.0 768.0"/>
<path vector-effect="non-scaling-stroke" d="M610.0 760.0 L700.0 740.0"/>
</g></g>
<g>
<g transform="translate(300,480) scale(0.293123)">
<path vector-effect="non-scaling-stroke" d="M150.0 0.0C145.0 16.7 129.2 66.7 120.0 100.0C110.8 133.3 100.8 161.7 95.0 200.0C89.2 238.3 85.0 293.3 85.0 330.0C85.0 366.7 95.0 396.7 95.0 420.0C95.0 443.3 84.2 450.0 85.0 470.0C85.8 490.0 95.0 519.2 100.0 540.0C105.0 560.8 112.5 585.8 115.0 595.0"/>
<path vector-effect="non-scaling-stroke" d="M115.0 360.0 L90.0 420.0"/>
<path vector-effect="non-scaling-stroke" d="M114.0 155.0C110.0 155.3 95.9 153.7 90.0 157.0C84.1 160.3 81.5 163.2 78.5 175.0C75.5 186.8 74.1 211.0 72.0 228.0C69.9 245.0 66.0 266.2 66.0 277.0C66.0 287.8 66.2 287.8 72.0 292.6C77.8 297.4 88.8 301.9 101.0 306.0C113.2 310.1 131.0 315.5 145.0 317.0C159.0 318.5 175.3 316.2 185.0 315.0C194.7 313.8 200.0 310.8 203.0 310.0"/>
<path vector-effect="non-scaling-stroke" d="M87.4 172.6C90.3 174.8 95.4 181.6 105.0 186.0C114.6 190.4 131.7 196.0 145.0 199.3C158.3 202.6 172.8 204.5 185.0 206.0C197.2 207.5 212.9 207.8 218.5 208.2"/>
<path vector-effect="non-scaling-stroke" d="M198.5 226.0 L206.5 196.2 L220.7 182.4 L247.4 197.1 L226.1 325.1 L208.3 333.1 L183.0 317.1"/>
<path vector-effect="non-scaling-stroke" d="M211.9 198.0 L231.9 203.7 L246.5 198.0"/>
<path vector-effect="non-scaling-stroke" d="M231.9 203.7 L212.8 329.5"/>
<path vector-effect="non-scaling-stroke" d="M220.7 201.5 L205.2 317.1"/>
<path vector-effect="non-scaling-stroke" d="M350.0 0.0C350.8 16.7 352.5 66.7 355.0 100.0C357.5 133.3 360.8 166.7 365.0 200.0C369.2 233.3 378.3 266.7 380.0 300.0C381.7 333.3 376.7 366.7 375.0 400.0C373.3 433.3 371.7 471.7 370.0 500.0C368.3 528.3 367.5 546.7 365.0 570.0C362.5 593.3 356.7 628.3 355.0 640.0"/>
<path vector-effect="non-scaling-stroke" d="M290.0 0.0C295.0 10.0 308.3 42.5 320.0 60.0C331.7 77.5 353.3 97.5 360.0 105.0"/>
<path vector-effect="non-scaling-stroke" d="M360.0 150.0C365.8 156.7 382.2 178.0 395.0 190.0C407.8 202.0 430.0 216.7 437.0 222.0"/>
<path vector-effect="non-scaling-stroke" d="M390.0 250.0C387.5 263.3 382.5 301.7 375.0 330.0C367.5 358.3 351.7 400.0 345.0 420.0C338.3 440.0 336.7 445.0 335.0 450.0"/>
<path vector-effect="non-scaling-stroke" d="M255.0 425.0C264.2 431.7 293.3 453.3 310.0 465.0C326.7 476.7 347.5 490.0 355.0 495.0"/>
<path vector-effect="non-scaling-stroke" d="M335.0 425.0C338.3 434.2 350.0 460.8 355.0 480.0C360.0 499.2 363.3 530.0 365.0 540.0"/>
<path vector-effect="non-scaling-stroke" d="M380.0 565.0C376.7 570.8 363.8 587.5 360.0 600.0C356.2 612.5 357.5 633.3 357.0 640.0"/>
<path vector-effect="non-scaling-stroke" d="M816.0 -34.0C815.0 -28.3 813.5 -30.7 810.0 0.0C806.5 30.7 800.0 100.0 795.0 150.0C790.0 200.0 784.2 250.0 780.0 300.0C775.8 350.0 770.3 395.8 770.0 450.0C769.7 504.2 776.7 595.8 778.0 625.0"/>
<path vector-effect="non-scaling-stroke" d="M745.0 215.0 L810.0 200.0"/>
<path vector-effect="non-scaling-stroke" d="M845.0 200.0 L887.0 210.0"/>
<path vector-effect="non-scaling-stroke" d="M150.0 0.0 L190.0 48.0"/>
</g></g>
<g>
<g transform="translate(540,480) scale(0.293123)">
<path vector-effect="non-scaling-stroke" d="M93.0 -34.0C93.3 -28.3 97.2 -30.7 95.0 0.0C92.8 30.7 84.2 100.0 80.0 150.0C75.8 200.0 70.8 250.0 70.0 300.0C69.2 350.0 71.7 394.2 75.0 450.0C78.3 505.8 87.5 604.2 90.0 635.0"/>
<path vector-effect="non-scaling-stroke" d="M25.0 200.0C31.7 200.8 51.2 201.3 65.0 205.0C78.8 208.7 100.8 219.2 108.0 222.0"/>
<path vector-effect="non-scaling-stroke" d="M555.0 0.0C553.8 16.7 549.7 75.0 548.0 100.0C546.3 125.0 548.8 125.0 545.0 150.0C541.2 175.0 529.2 216.7 525.0 250.0C520.8 283.3 518.3 316.7 520.0 350.0C521.7 383.3 531.7 415.0 535.0 450.0C538.3 485.0 537.8 528.3 540.0 560.0C542.2 591.7 546.7 626.7 548.0 640.0"/>
<path vector-effect="non-scaling-stroke" d="M620.0 0.0C615.0 8.3 600.8 36.7 590.0 50.0C579.2 63.3 560.8 75.0 555.0 80.0"/>
<path vector-effect="non-scaling-stroke" d="M545.0 150.0C539.2 157.5 523.0 182.8 510.0 195.0C497.0 207.2 474.2 218.3 467.0 223.0"/>
<path vector-effect="non-scaling-stroke" d="M515.0 250.0C517.5 263.3 523.3 301.7 530.0 330.0C536.7 358.3 548.3 401.7 555.0 420.0C561.7 438.3 567.5 436.7 570.0 440.0"/>
<path vector-effect="non-scaling-stroke" d="M650.0 425.0C641.7 431.7 616.7 453.3 600.0 465.0C583.3 476.7 558.3 490.0 550.0 495.0"/>
<path vector-effect="non-scaling-stroke" d="M565.0 430.0C561.7 441.7 550.0 475.0 545.0 500.0C540.0 525.0 536.7 566.7 535.0 580.0"/>
<path vector-effect="non-scaling-stroke" d="M525.0 565.0C528.3 570.8 541.2 587.5 545.0 600.0C548.8 612.5 547.5 633.3 548.0 640.0"/>
<path vector-effect="non-scaling-stroke" d="M765.0 0.0C769.2 13.3 783.3 53.3 790.0 80.0C796.7 106.7 800.0 131.7 805.0 160.0C810.0 188.3 816.3 221.7 820.0 250.0C823.7 278.3 827.0 308.3 827.0 330.0C827.0 351.7 818.7 360.0 820.0 380.0C821.3 400.0 835.8 426.7 835.0 450.0C834.2 473.3 819.5 491.7 815.0 520.0C810.5 548.3 809.2 603.3 808.0 620.0"/>
<path vector-effect="non-scaling-stroke" d="M795.0 370.0 L820.0 410.0 L800.0 430.0"/>
<path vector-effect="non-scaling-stroke" d="M712.0 48.0 L755.0 0.0"/>
<path vector-effect="non-scaling-stroke" d="M709.5 223.7 L700.6 187.3 L682.8 178.4 L660.6 192.6 L689.5 323.7 L702.8 329.5 L727.3 319.3"/>
<path vector-effect="non-scaling-stroke" d="M667.3 194.9 L696.2 326.0"/>
<path vector-effect="non-scaling-stroke" d="M678.4 197.1 L705.0 317.1 L720.6 312.6"/>
<path vector-effect="non-scaling-stroke" d="M665.0 194.9 L687.3 184.6 L700.6 188.2"/>
<path vector-effect="non-scaling-stroke" d="M689.5 203.7C695.4 203.0 711.7 201.9 725.0 199.3C738.3 196.7 756.2 191.9 769.5 188.2C782.8 184.5 796.9 180.4 805.0 177.1C813.1 173.8 816.2 169.7 818.4 168.2"/>
<path vector-effect="non-scaling-stroke" d="M791.7 152.6C796.2 152.2 812.1 148.6 818.4 150.4C824.7 152.2 826.2 153.7 829.5 163.7C832.8 173.7 836.0 193.7 838.4 210.4C840.8 227.1 844.1 251.1 844.1 263.7C844.1 276.3 842.7 280.4 838.4 286.0C834.1 291.6 828.4 293.0 818.4 297.1C808.4 301.2 791.0 307.4 778.4 310.4C765.8 313.3 752.4 314.8 742.8 314.8C733.2 314.8 723.2 312.6 720.6 310.4C718.0 308.2 726.2 303.0 727.3 301.5"/>
</g></g>
</g>
</svg>
</div>
<div id="lefttool" class="abs"></div>
<div id="lefthead" class="abs"></div>
<div id="leftsep" class="abs"></div>
<div id="vscroll" class="abs"></div>
<div id="vthumb" class="abs"></div>
<div id="hbar" class="abs"></div>
<div id="hthumb" class="abs"></div>
<!-- status bar widgets -->
<div class="b" style="left:42px;top:703px;width:432px;height:17px;background:#535353"></div>
<div class="b" style="left:46px;top:704px;width:51px;height:16px;background:#464646"></div>
<div class="b" style="left:156px;top:704px;width:41px;height:16px;background:#464646"></div>
<div class="b" style="left:97px;top:704px;width:1px;height:16px;background:#404040"></div>
<div class="b" style="left:114px;top:704px;width:1px;height:16px;background:#484848"></div>
<div class="b" style="left:197px;top:704px;width:1px;height:16px;background:#404040"></div>
<div class="b" style="left:213px;top:704px;width:1px;height:16px;background:#484848"></div>
<div class="b" style="left:255px;top:704px;width:2px;height:16px;background:#484848"></div>
<div class="b" style="left:456px;top:704px;width:1px;height:16px;background:#484848"></div>
<div class="b" style="left:473px;top:704px;width:1px;height:16px;background:#484848"></div>
<div id="rdocksep" class="abs"></div>
<div id="rhead" class="abs"></div>
<div id="iconcol" class="abs"></div>
<div id="iconcell" class="abs"></div>
<div id="iconsep" class="abs"></div>
<div id="panel" class="abs"></div>
<div id="ptabs" class="abs"></div>
<div class="b ptab" style="left:1182px;width:47px"></div>
<div class="b ptab" style="left:1229px;width:59px"></div>
<div class="b" style="left:1181px;top:43px;width:1px;height:26px;background:#383838"></div>
<!-- panel content -->
<div class="b" style="left:1260px;top:77px;width:93px;height:20px;border:1px solid #707070;border-radius:3px"></div>
<div class="b sep" style="top:103px"></div>
<div class="b inp" style="left:1169px;top:134px;width:57px;height:21px"></div>
<div class="b inp" style="left:1169px;top:160px;width:57px;height:21px"></div>
<div class="b inp" style="left:1258px;top:134px;width:57px;height:21px"></div>
<div class="b inp" style="left:1258px;top:160px;width:57px;height:21px"></div>
<div class="b inp" style="left:1167px;top:186px;width:57px;height:20px"></div>
<div class="b sep" style="top:227px"></div>
<div class="b dk" style="left:1204px;top:293px;width:70px;height:21px;border-radius:3px"></div>
<div class="b" style="left:1205px;top:294px;width:16px;height:19px;background:#535353;border-radius:2px 0 0 2px"></div>
<div class="b" style="left:1255px;top:294px;width:18px;height:19px;background:#535353;border-radius:0 2px 2px 0"></div>
<div class="b" style="left:1221px;top:294px;width:1px;height:19px;background:#626262"></div>
<div class="b" style="left:1254px;top:294px;width:1px;height:19px;background:#626262"></div>
<div class="b dk" style="left:1204px;top:322px;width:70px;height:20px;border-radius:3px"></div>
<div class="b" style="left:1254px;top:323px;width:1px;height:18px;background:#626262"></div>
<div class="b" style="left:1255px;top:323px;width:18px;height:18px;background:#535353;border-radius:0 2px 2px 0"></div>
<div class="b sep" style="top:399px"></div>
<div class="b" style="left:1169px;top:411px;width:110px;height:21px;border:1px solid #626262;border-radius:3px;background:#454545"></div>
<div class="b" style="left:1170px;top:412px;width:90px;height:19px;background:#e2e2e2"></div>
<div class="b sep" style="top:448px"></div>
<div id="taskbar" class="abs"></div>
<div id="botline" class="abs"></div>
<div class="t" style="left:89.5px;top:8.4px;font-size:12px;line-height:12px;font-weight:400;color:#e4e4e4;letter-spacing:-0.481px;">File</div>
<div class="t" style="left:122.4px;top:8.4px;font-size:12px;line-height:12px;font-weight:400;color:#e4e4e4;letter-spacing:-0.296px;">Edit</div>
<div class="t" style="left:157.2px;top:8.4px;font-size:12px;line-height:12px;font-weight:400;color:#e4e4e4;letter-spacing:0.083px;">Object</div>
<div class="t" style="left:207.1px;top:8.4px;font-size:12px;line-height:12px;font-weight:400;color:#e4e4e4;letter-spacing:-0.272px;">Type</div>
<div class="t" style="left:247.2px;top:8.4px;font-size:12px;line-height:12px;font-weight:400;color:#e4e4e4;letter-spacing:-0.472px;">Select</div>
<div class="t" style="left:293.0px;top:8.4px;font-size:12px;line-height:12px;font-weight:400;color:#e4e4e4;letter-spacing:-0.094px;">Effect</div>
<div class="t" style="left:338.0px;top:8.4px;font-size:12px;line-height:12px;font-weight:400;color:#e4e4e4;letter-spacing:-0.432px;">View</div>
<div class="t" style="left:377.0px;top:8.4px;font-size:12px;line-height:12px;font-weight:400;color:#e4e4e4;letter-spacing:0.163px;">Window</div>
<div class="t" style="left:435.0px;top:8.4px;font-size:12px;line-height:12px;font-weight:400;color:#e4e4e4;letter-spacing:0.104px;">Help</div>
<div class="t" style="left:1010.6px;top:8.6px;font-size:11.87px;line-height:11.87px;font-weight:400;color:#e4e4e4;letter-spacing:-0.500px;">Essentials</div>
<div class="t" style="left:1126.8px;top:8.8px;font-size:11.51px;line-height:11.51px;font-weight:400;color:#9c9c9c;letter-spacing:-0.500px;">Search Adobe Stock</div>
<div class="t" style="left:51.0px;top:39.7px;font-size:11px;line-height:11px;font-weight:700;color:#f2f2f2;letter-spacing:-0.008px;">OPA - Light Healer.ai* @ 39.86% (RGB/GPU Preview)</div>
<div class="t" style="left:1124.6px;top:50.5px;font-size:10px;line-height:10px;font-weight:700;color:#ffffff;letter-spacing:-0.341px;">Properties</div>
<div class="t" style="left:1190.5px;top:50.5px;font-size:10px;line-height:10px;font-weight:400;color:#c6c6c6;letter-spacing:-0.403px;">Layers</div>
<div class="t" style="left:1238.5px;top:50.5px;font-size:10px;line-height:10px;font-weight:400;color:#c6c6c6;letter-spacing:0.080px;">Libraries</div>
<div class="t" style="left:1125.0px;top:82.5px;font-size:10px;line-height:10px;font-weight:400;color:#d6d6d6;letter-spacing:-0.155px;">No Selection</div>
<div class="t" style="left:1279.0px;top:82.6px;font-size:9.93px;line-height:9.93px;font-weight:700;color:#ffffff;letter-spacing:-0.500px;">Tool Options</div>
<div class="t" style="left:1125.0px;top:116.5px;font-size:10px;line-height:10px;font-weight:400;color:#d6d6d6;letter-spacing:-0.150px;">Transform</div>
<div class="t" style="left:1155.5px;top:140.9px;font-size:9.0px;line-height:9.0px;font-weight:700;color:#d0d0d0;letter-spacing:-0.500px;">X:</div>
<div class="t" style="left:1155.5px;top:166.3px;font-size:9.71px;line-height:9.71px;font-weight:700;color:#d0d0d0;letter-spacing:-0.500px;">Y:</div>
<div class="t" style="left:1240.5px;top:140.1px;font-size:9.93px;line-height:9.93px;font-weight:700;color:#d0d0d0;letter-spacing:-0.500px;">W:</div>
<div class="t" style="left:1240.5px;top:166.1px;font-size:9.94px;line-height:9.94px;font-weight:700;color:#d0d0d0;letter-spacing:-0.500px;">H:</div>
<div class="t" style="left:1175.0px;top:139.5px;font-size:10px;line-height:10px;font-weight:400;color:#888888;letter-spacing:0.031px;">0 px</div>
<div class="t" style="left:1175.0px;top:165.5px;font-size:10px;line-height:10px;font-weight:400;color:#888888;letter-spacing:0.031px;">0 px</div>
<div class="t" style="left:1264.0px;top:139.5px;font-size:10px;line-height:10px;font-weight:400;color:#888888;letter-spacing:-0.242px;">0.0001 px</div>
<div class="t" style="left:1264.0px;top:165.5px;font-size:10px;line-height:10px;font-weight:400;color:#888888;letter-spacing:-0.242px;">0.0001 px</div>
<div class="t" style="left:1171.4px;top:191.5px;font-size:10px;line-height:10px;font-weight:400;color:#888888;letter-spacing:0.037px;">0°</div>
<div class="t" style="left:1125.0px;top:241.5px;font-size:10px;line-height:10px;font-weight:400;color:#d6d6d6;letter-spacing:-0.238px;">Appearance</div>
<div class="t" style="left:1155.0px;top:270.0px;font-size:10px;line-height:10px;font-weight:400;color:#d6d6d6;letter-spacing:-0.160px;">Fill</div>
<div class="t" style="left:1155.0px;top:299.5px;font-size:10px;line-height:10px;font-weight:400;color:#ffffff;letter-spacing:-0.221px;border-bottom:1px dotted #d0d0d0;padding-bottom:1px;text-shadow:0.35px 0 0 #fff;">Stroke</div>
<div class="t" style="left:1155.0px;top:328.5px;font-size:10px;line-height:10px;font-weight:400;color:#ffffff;letter-spacing:-0.201px;border-bottom:1px dotted #d0d0d0;padding-bottom:1px;text-shadow:0.35px 0 0 #fff;">Opacity</div>
<div class="t" style="left:1226.0px;top:298.0px;font-size:10px;line-height:10px;font-weight:400;color:#ffffff;letter-spacing:0.134px;">0.5 pt</div>
<div class="t" style="left:1208.4px;top:327.0px;font-size:10px;line-height:10px;font-weight:400;color:#ffffff;letter-spacing:-0.326px;">100%</div>
<div class="t" style="left:1131.0px;top:359.9px;font-size:12.5px;line-height:12.5px;font-weight:400;color:#c8c8c8;letter-spacing:0.000px;font-style:italic;">fx</div>
<div class="t" style="left:1125.0px;top:417.5px;font-size:10px;line-height:10px;font-weight:400;color:#d6d6d6;letter-spacing:-0.181px;">Brush</div>
<div class="t" style="left:1125.0px;top:468.5px;font-size:10px;line-height:10px;font-weight:400;color:#d6d6d6;letter-spacing:-0.091px;">Quick Actions</div>
<div class="t" style="left:49.2px;top:709.1px;font-size:10px;line-height:10px;font-weight:400;color:#ffffff;letter-spacing:-0.184px;">39.86%</div>
<div class="t" style="left:159.5px;top:709.1px;font-size:10px;line-height:10px;font-weight:400;color:#ffffff;letter-spacing:0.000px;">1</div>
<div class="t" style="left:332.7px;top:708.9px;font-size:10px;line-height:10px;font-weight:400;color:#d0d0d0;letter-spacing:-0.168px;">Paintbrush</div>
<div class="t" style="left:50.8px;top:730.8px;font-size:11.77px;line-height:11.77px;font-weight:400;color:#ffffff;letter-spacing:-0.500px;">23°C</div>
<div class="t" style="left:50.8px;top:746.2px;font-size:12px;line-height:12px;font-weight:400;color:#cfcfcf;letter-spacing:-0.032px;">Cloudy</div>
<div class="t" style="left:434.9px;top:736.9px;font-size:13.76px;line-height:13.76px;font-weight:400;color:#dadada;letter-spacing:-0.500px;">Search</div>
<div class="t" style="left:1162.3px;top:731.7px;font-size:11px;line-height:11px;font-weight:400;color:#ffffff;letter-spacing:-0.422px;">ENG</div>
<div class="t" style="left:1166.5px;top:747.7px;font-size:11px;line-height:11px;font-weight:400;color:#ffffff;letter-spacing:0.219px;">UK</div>
<div class="t" style="left:1318.7px;top:730.6px;font-size:11.5px;line-height:11.5px;font-weight:400;color:#ffffff;letter-spacing:-0.120px;">14:23</div>
<div class="t" style="left:1285.2px;top:746.3px;font-size:11.5px;line-height:11.5px;font-weight:400;color:#ffffff;letter-spacing:0.471px;">05/09/2025</div>
<div class="t" style="left:777.3px;top:730.9px;font-size:10px;line-height:10px;font-weight:400;color:#e6e6e6;letter-spacing:1.075px;z-index:5;">20</div>
<div class="t" style="left:825.3px;top:731.0px;font-size:8px;line-height:8px;font-weight:700;color:#ffffff;letter-spacing:0.000px;z-index:5;">T</div>
<div class="t" style="left:724.1px;top:736.8px;font-size:13px;line-height:13px;font-weight:700;color:#ff9a00;letter-spacing:-0.100px;z-index:5;">Ai</div>
<div class="t" style="left:942.4px;top:737.4px;font-size:12.29px;line-height:12.29px;font-weight:700;color:#9999ff;letter-spacing:-0.500px;z-index:5;">An</div>
<div class="t" style="left:13.2px;top:9.9px;font-size:9.5px;line-height:9.5px;font-weight:700;color:#ff9a00;letter-spacing:-0.400px;z-index:5;">Ai</div>
<svg width="1366" height="768" viewBox="0 0 1366 768">
<g id="menubar-icons">
<rect x="10" y="7" width="15.5" height="15" rx="2.6" fill="#310000"/>
<path d="M49 7.4 L58.4 16.7 L56.3 18.6 L56.3 23 L51.1 23 L51.1 17.4 L46.8 17.4 L46.8 23 L41.9 23 L41.9 18.6 L39.7 16.7 Z" fill="#cdcdcd"/>
<path d="M72.5 5V25M472.5 5V25M998.5 5V25M1091.8 5V25" stroke="#474747" stroke-width="1.6"/>
<path d="M483.5 8h6.6v11h-6.6zM491.6 8h9.6v4.6h-9.6zM491.6 14.2h9.6v4.8h-9.6z" fill="#cdcdcd"/>
<path d="M510 12.3l3.6 3.6 3.6-3.6" stroke="#e0e0e0" stroke-width="1.6" fill="none"/>
<path d="M1070.8 13l3.6 3.6 3.6-3.6" stroke="#e0e0e0" stroke-width="1.6" fill="none"/>
<rect x="1101.5" y="4.5" width="169" height="20" rx="3" fill="#454545" stroke="#686868"/>
<circle cx="1108.6" cy="12.6" r="3.4" fill="none" stroke="#d4d4d4" stroke-width="1.5"/>
<path d="M1111 15l3 3" stroke="#d4d4d4" stroke-width="1.8"/>
<path d="M1116.2 12.6l2.8 2.6 2.8-2.6" stroke="#d4d4d4" stroke-width="1.3" fill="none"/>
<path d="M1279.5 0V15a3 3 0 0 0 3 3H1366M1308 0V18M1335.5 0V18" stroke="#6c6c6c" fill="none"/>
<rect x="1288" y="11" width="10.6" height="2.8" fill="#cdcdcd"/>
<path d="M1319 8V4.8h8.2v6.4H1323.5" stroke="#cdcdcd" stroke-width="1.7" fill="none"/>
<rect x="1315.4" y="8.2" width="7.6" height="6" stroke="#cdcdcd" stroke-width="1.7" fill="none"/>
<path d="M1344.5 5.3l9.4 7.6M1353.9 5.3l-9.4 7.6" stroke="#cdcdcd" stroke-width="2.3"/>
<path d="M677.3 40.6l5.6 5.6M682.9 40.6l-5.6 5.6" stroke="#f0f0f0" stroke-width="1.9" transform="translate(-337.6,1.5)"/>
</g>
<g id="dock-heads" fill="#d2d2d2">
<path d="M5.8 33.7l3.6 2.9-3.6 2.9zM9.6 33.7l3.6 2.9-3.6 2.9z"/>
<path d="M1102.4 34.4l-3.6 2.3 3.6 2.3zM1106.4 34.4l-3.6 2.3 3.6 2.3z"/>
<path d="M1352 34.4l3.4 2.3-3.4 2.3zM1355.6 34.4l3.4 2.3-3.4 2.3z"/>
<path d="M10 46v4M12 46v4M14 46v4M16 46v4M18 46v4M20 46v4M22 46v4M24 46v4M26 46v4M28 46v4" stroke="#3b3b3b" stroke-width="1" transform="translate(0.5,0)"/>
<path d="M1084 46v4M1086 46v4M1088 46v4M1090 46v4M1092 46v4M1094 46v4M1096 46v4M1098 46v4M1100 46v4M1102 46v4" stroke="#3b3b3b" stroke-width="1" transform="translate(0.5,0)"/>
<circle cx="1094.4" cy="66.5" r="5.8"/>
<circle cx="1094.4" cy="66.5" r="8.3" fill="none" stroke="#d2d2d2" stroke-width="1.2" stroke-dasharray="2.3 1.7"/>
</g>
<g id="tools" fill="#c9c9c9">
<!-- selection -->
<path d="M15.3 66.7V82.2L19.6 77.6L26.5 76.6Z" fill="none" stroke="#c9c9c9" stroke-width="1.4" stroke-linejoin="miter"/>
<!-- direct selection -->
<path d="M14.8 90V107L19.8 102.1L27.3 101.3Z"/>
<path d="M33 104.6V108H29.6Z"/>
<!-- pen -->
<g id="pen">
<path d="M12 129.8C12.3 126.4 13.2 122.2 15.4 119.6C16.8 118.2 18.6 117.2 20.2 116.6L25 121.8C24.7 123.4 23.8 125.3 22.5 126.5C19.8 128.8 15.6 129.7 12 129.8Z"/>
<path d="M12.7 129.1L17.6 124.5" stroke="#535353" stroke-width="0.9"/>
<path d="M20.7 115.9L23 113.6L28.5 119L26.1 121.3Z"/>
</g>
<path d="M33 128.6V132H29.6Z"/>
<!-- curvature -->
<g transform="translate(2.1,24.1)">
<path d="M12 129.8C12.3 126.4 13.2 122.2 15.4 119.6C16.8 118.2 18.6 117.2 20.2 116.6L25 121.8C24.7 123.4 23.8 125.3 22.5 126.5C19.8 128.8 15.6 129.7 12 129.8Z"/>
<path d="M12.7 129.1L17.6 124.5" stroke="#535353" stroke-width="0.9"/>
<path d="M20.7 115.9L23 113.6L28.5 119L26.1 121.3Z"/>
</g>
<path d="M10.6 139.2C12.8 140.4 14 142 13.2 144.2C12.4 146.4 10.6 148.6 10.4 150.6C10.2 152.8 11.8 154 14 154" fill="none" stroke="#c9c9c9" stroke-width="1.25"/>
<!-- rectangle -->
<rect x="12.6" y="163.6" width="15" height="13" fill="#6c6c6c" stroke="#c9c9c9" stroke-width="1.4"/>
<path d="M33 176.6V180H29.6Z"/>
<!-- paintbrush (selected) -->
<rect x="6" y="183" width="28" height="22" rx="2.5" fill="#2b2b2b"/>
<path d="M28.3 185.6C29 186.2 28.8 187.4 28 188.6L21.2 198L18.2 195.6L26 186.6C26.8 185.7 27.7 185.2 28.3 185.6Z" fill="#d6d6d6"/>
<path d="M17.4 196.4L20.4 198.8C20.4 201.5 17.5 202.6 11.8 202.2C13.8 201 14 199.8 14.4 198.4C14.9 196.8 16.2 196.2 17.4 196.4Z" fill="#d6d6d6"/>
<path d="M33 200.6V204H29.6Z" fill="#d6d6d6"/>
<!-- type -->
<path d="M13 211H27V215.2H25.8C25.6 213.6 25 213 23.4 213H21.2V222.4C21.2 223.4 21.8 223.8 23.4 223.8V225H16.6V223.8C18.2 223.8 18.8 223.4 18.8 222.4V213H16.6C15 213 14.4 213.6 14.2 215.2H13Z"/>
<path d="M33 224.6V228H29.6Z"/>
<!-- rotate -->
<path d="M14.4 238A7.4 7.4 0 0 1 27.8 243.6" fill="none" stroke="#c9c9c9" stroke-width="1.8"/>
<path d="M27.6 245.4A7.4 7.4 0 0 1 13.3 244.6" fill="none" stroke="#c9c9c9" stroke-width="1.5" stroke-dasharray="1.2 1.5"/>
<path d="M11.4 241.8L18 240.6L14.6 235.2Z"/>
<path d="M33 248.6V252H29.6Z"/>
<!-- eraser -->
<path d="M21.4 257.6L29.4 264.6L22.6 272.2L14.6 265.2Z"/>
<path d="M13.8 266.2L21.6 273.2L19.4 275.4C18.6 276.2 17.6 276.2 16.8 275.5L12 271.2C11.2 270.5 11.2 269.4 11.9 268.6Z" fill="none" stroke="#c9c9c9" stroke-width="1.2"/>
<path d="M33 272.6V276H29.6Z"/>
<!-- shape builder -->
<ellipse cx="17.2" cy="289.4" rx="6" ry="5.2" fill="none" stroke="#c9c9c9" stroke-width="1.2"/>
<ellipse cx="22.6" cy="288" rx="5.4" ry="5.6" fill="none" stroke="#c9c9c9" stroke-width="1.2"/>
<path d="M13.6 289.4h6" stroke="#c9c9c9" stroke-width="1.2" stroke-dasharray="1 1"/>
<path d="M23.2 287.2V298.4L26 295.6L31 295Z" stroke="#535353" stroke-width="0.8"/>
<!-- gradient -->
<defs><linearGradient id="gr1" x1="0" y1="0" x2="1" y2="0.6"><stop offset="0" stop-color="#161616"/><stop offset="1" stop-color="#c4c4c4"/></linearGradient>
<linearGradient id="gr2" x1="0" y1="0" x2="1" y2="0"><stop offset="0" stop-color="#fff"/><stop offset="1" stop-color="#222"/></linearGradient></defs>
<rect x="12.6" y="307.6" width="15" height="13" fill="url(#gr1)" stroke="#c9c9c9" stroke-width="1.3"/>
<path d="M33 320.6V324H29.6Z"/>
<!-- eyedropper -->
<g transform="translate(12.3,345.1) rotate(-43)">
<rect x="0.6" y="-2.3" width="12.4" height="4.6" rx="2.3" fill="none" stroke="#c9c9c9" stroke-width="1.25"/>
<rect x="11.6" y="-4.2" width="2.7" height="8.4" rx="0.8"/>
<rect x="13.6" y="-2.9" width="8.2" height="5.8" rx="2.6"/>
</g>
<!-- symbol sprayer / puppet -->
<path d="M12.8 357C13.8 354.4 17.8 354.4 18.2 357.6C18.4 359.8 17 361 17.8 362.6C18.8 364.4 21.4 364 23.4 362C25.2 360.2 27.8 359.2 29.4 360.6C30.8 361.8 30.6 364.6 29.2 366C29.2 364.2 27.8 363.4 26.4 364.4C24.6 365.8 22.8 368.2 19 367.8C15.2 367.4 13.2 364.4 14.2 361.4C14.8 359.6 16 358.6 15.2 357.4C14.6 356.6 13.6 356.6 12.8 357Z"/>
<path d="M12.2 368L22.4 358" stroke="#c9c9c9" stroke-width="1"/>
<circle cx="22.6" cy="357.6" r="1.5" fill="#535353" stroke="#c9c9c9" stroke-width="0.9"/>
<circle cx="17.2" cy="363" r="1.5" fill="#535353" stroke="#c9c9c9" stroke-width="0.9"/>
<rect x="10.8" y="366.6" width="2.6" height="2.6" fill="#535353" stroke="#c9c9c9" stroke-width="0.9"/>
<!-- shape/live paint -->
<rect x="11" y="379.4" width="7.4" height="7.4"/>
<circle cx="19.8" cy="385.6" r="3.8" fill="#8a8a8a" stroke="#535353" stroke-width="0.8"/>
<circle cx="25" cy="389.4" r="3.9" fill="#535353" stroke="#c9c9c9" stroke-width="1.2"/>
<!-- artboard -->
<path d="M15.2 401V407.6M10 404.6H17.4" stroke="#c9c9c9" stroke-width="1.2" fill="none"/>
<path d="M15.8 407.2H23.4L26.6 410.4V416.4H15.8Z" fill="#6c6c6c" stroke="#c9c9c9" stroke-width="1.2"/>
<!-- zoom -->
<circle cx="18.2" cy="431.8" r="5.3" fill="none" stroke="#c9c9c9" stroke-width="1.7"/>
<path d="M22.2 436L28.4 442.4" stroke="#c9c9c9" stroke-width="2.3"/>
<path d="M33 440.6V444H29.6Z"/>
<path d="M6 448.5H34" stroke="#5b5b5b" stroke-width="1"/>
<!-- default fill/stroke -->
<rect x="8.4" y="456" width="8.6" height="8.6" fill="#000" stroke="#c8c8c8" stroke-width="0.9"/>
<rect x="10.9" y="458.5" width="3.6" height="3.6" fill="none" stroke="#c8c8c8" stroke-width="0.8"/>
<rect x="5.1" y="453" width="9" height="8.6" fill="#c8c8c8"/>
<rect x="6.2" y="454.1" width="6.8" height="6.4" fill="#fff" stroke="#000" stroke-width="1"/>
<!-- swap -->
<path d="M27.6 457.4C29.6 455.8 32.4 456.6 33.2 459.2L33.8 462" fill="none" stroke="#cfcfcf" stroke-width="1.9"/>
<path d="M25.8 456.6L29.8 453.8L29.6 459.6Z" fill="#cfcfcf"/>
<path d="M30.4 461L37 460.8L33.8 465.6Z" fill="#cfcfcf"/>
<!-- stroke swatch -->
<rect x="16.3" y="481.7" width="18.1" height="18.1" fill="#000" stroke="#fff" stroke-width="0.9"/>
<rect x="20.6" y="486" width="9.5" height="9.5" fill="#4f4f4f" stroke="#fff" stroke-width="1"/>
<!-- fill swatch -->
<rect x="5.4" y="471.6" width="19" height="19" fill="#fff" stroke="#2a2a2a" stroke-width="1"/>
<path d="M6.2 489.6L23.8 472.6" stroke="#f20d0d" stroke-width="2.2"/>
<!-- color mode -->
<rect x="6.4" y="507.6" width="8.6" height="9" fill="#fff" stroke="#2a2a2a" stroke-width="0.8"/>
<rect x="15.8" y="507.6" width="8.6" height="9" fill="url(#gr2)" stroke="#2a2a2a" stroke-width="0.8"/>
<rect x="25.2" y="507.6" width="8.6" height="9" fill="#fff" stroke="#2a2a2a" stroke-width="0.8"/>
<path d="M25.8 516L33.2 508.2" stroke="#f20d0d" stroke-width="2"/>
<!-- draw mode -->
<circle cx="19.4" cy="529.6" r="4" fill="#535353" stroke="#c9c9c9" stroke-width="1.1"/>
<rect x="19.6" y="530" width="6" height="6"/>
<!-- screen mode -->
<rect x="17.4" y="549.6" width="11.6" height="8.4" fill="#6c6c6c" stroke="#c9c9c9" stroke-width="1.1"/>
<rect x="11.6" y="553.6" width="11.6" height="8.4" fill="#6c6c6c" stroke="#c9c9c9" stroke-width="1.1"/>
<circle cx="15.4" cy="588" r="1.3"/><circle cx="20" cy="588" r="1.3"/><circle cx="24.6" cy="588" r="1.3"/>
</g>
<g id="panel-icons">
<!-- reference point -->
<g fill="#535353" stroke="#d8d8d8" stroke-width="1">
<path d="M1127.5 150.5H1141.5V164.5H1127.5ZM1134.5 150.5V164.5M1127.5 157.5H1141.5" fill="none"/>
<rect x="1125.5" y="148.5" width="4" height="4"/><rect x="1132.5" y="148.5" width="4" height="4"/><rect x="1139.5" y="148.5" width="4" height="4"/>
<rect x="1125.5" y="155.5" width="4" height="4"/><rect x="1132.5" y="155.5" width="4" height="4" fill="#fff"/><rect x="1139.5" y="155.5" width="4" height="4"/>
<rect x="1125.5" y="162.5" width="4" height="4"/><rect x="1132.5" y="162.5" width="4" height="4"/><rect x="1139.5" y="162.5" width="4" height="4"/>
</g>
<!-- broken link -->
<g fill="none" stroke="#d4d4d4" stroke-width="1.7" stroke-linecap="round">
<path d="M1333 156V153.6A3.1 3.1 0 0 1 1339.2 153.6V156"/>
<path d="M1333 160V162.6A3.1 3.1 0 0 0 1339.2 162.6V160"/>
<path d="M1336.1 154.6V161.6" stroke-width="1.5"/>
<path d="M1329.4 150.6L1343.4 165.4" stroke-width="1.5"/>
</g>
<!-- angle -->
<path d="M1159.4 190.8L1151 199.4H1162.4" fill="none" stroke="#c8c8c8" stroke-width="1.3"/>
<path d="M1155.6 195A5.4 5.4 0 0 1 1157.6 199.4" fill="none" stroke="#c8c8c8" stroke-width="1"/>
<rect x="1164.4" y="192.8" width="1.5" height="1.6" fill="#c8c8c8"/><rect x="1164.4" y="198" width="1.5" height="1.6" fill="#c8c8c8"/>
<path d="M1209.4 195.4l3.8 3.6 3.8-3.6" fill="none" stroke="#7c7c7c" stroke-width="1.4"/>
<!-- flip h -->
<path d="M1266.6 193.2V203L1271 198.1Z" fill="none" stroke="#d4d4d4" stroke-width="1.1"/>
<path d="M1279.2 192.6V203.6L1274.2 198.1Z" fill="#d4d4d4"/>
<path d="M1272.6 191V205.4" stroke="#d4d4d4" stroke-width="1" stroke-dasharray="1.2 1.2"/>
<!-- flip v -->
<path d="M1290.6 191.4H1301.6L1296.1 196.6Z" fill="#d4d4d4"/>
<path d="M1291.2 204.4H1301L1296.1 199.8Z" fill="none" stroke="#d4d4d4" stroke-width="1.1"/>
<path d="M1289.6 198.2H1303" stroke="#d4d4d4" stroke-width="1" stroke-dasharray="1.2 1.2"/>
<g fill="#d4d4d4"><circle cx="1333.6" cy="218" r="1.35"/><circle cx="1338.4" cy="218" r="1.35"/><circle cx="1343.2" cy="218" r="1.35"/>
<circle cx="1333.6" cy="390" r="1.35"/><circle cx="1338.4" cy="390" r="1.35"/><circle cx="1343.2" cy="390" r="1.35"/></g>
<!-- fill -->
<rect x="1125.5" y="265" width="17.6" height="17.6" fill="#fff" stroke="#1e1e1e" stroke-width="1"/>
<path d="M1126.6 281.6L1142.2 266" stroke="#f20d0d" stroke-width="2"/>
<!-- stroke -->
<rect x="1125.5" y="294.4" width="17.6" height="17.6" fill="#000" stroke="#1e1e1e" stroke-width="1"/>
<rect x="1127.6" y="296.5" width="13.4" height="13.4" fill="none" stroke="#fff" stroke-width="1.2"/>
<rect x="1130.8" y="299.7" width="7" height="7" fill="#4c4c4c" stroke="#d0d0d0" stroke-width="1.1"/>
<!-- opacity -->
<g>
<rect x="1125.5" y="324" width="17" height="16" fill="#5a5a5a" stroke="#808080" stroke-width="1"/>
<path d="M1126 324.5h4v4h-4zM1134 324.5h4v4h-4zM1130 328.5h4v4h-4zM1138 328.5h4v4h-4zM1126 332.5h4v4h-4zM1134 332.5h4v4h-4zM1130 336.5h4v3h-4zM1138 336.5h4v3h-4z" fill="#6f6f6f"/>
</g>
<!-- stepper -->
<path d="M1209.4 301.6l3.4-3.4 3.4 3.4M1209.4 305.8l3.4 3.4 3.4-3.4M1260.2 301.4l3.8 3.6 3.8-3.6" fill="none" stroke="#f0f0f0" stroke-width="1.5"/>
<path d="M1262.4 327.8l3.8 4.2-3.8 4.2" fill="none" stroke="#f0f0f0" stroke-width="1.5"/>
<path d="M1144.6 370.6h2.2l-1.1 1.4z" fill="#c8c8c8"/>
<!-- brush -->
<path d="M1178 422H1256" stroke="#1a1a1a" stroke-width="0.9"/><path d="M1190 422C1196 420.8 1236 420.8 1243 422C1236 423.2 1196 423.2 1190 422Z" fill="#0a0a0a"/>
<path d="M1265.2 420l3.8 3.6 3.8-3.6" fill="none" stroke="#f0f0f0" stroke-width="1.5"/>
<g stroke="#6e6e6e" fill="none" stroke-width="1"><rect x="1293.5" y="416.5" width="10" height="11" rx="1"/><path d="M1295.5 420h1M1298 420h4M1295.5 422.5h1M1298 422.5h4M1295.5 425h1M1298 425h4"/></g>
<path d="M1323 416.6V426.4M1326 416.6V426.4M1329 417L1332.8 426.4" stroke="#d4d4d4" stroke-width="1.6" fill="none"/>
<path d="M1333.4 425.4h3l-1.5 1.8z" fill="#d4d4d4"/>
</g>
<g id="status-icons" fill="none">
<path d="M100.8 712.2l3.8 3.8 3.8-3.8M201 712.2l3.8 3.8 3.8-3.8" stroke="#f0f0f0" stroke-width="1.6"/>
<g fill="#787878">
<path d="M123 708h1.6v8H123zM131 708v8l-5.6-4zM146 708v8l-5.6-4z"/>
<path d="M224 708v8l5.6-4zM239 708v8l5.6-4zM245.4 708h1.6v8h-1.6z"/>
</g>
<path d="M462.6 707.6v8.8l6-4.4z" fill="#e6e6e6"/>
<path d="M484.4 707.6l-3.6 4 3.6 4M1046 707.6l3.6 4-3.6 4" stroke="#b4b4b4" stroke-width="1.4"/>
<path d="M1060.6 70.4l3.9-3.9 3.9 3.9M1060.6 692.6l3.9 3.9 3.9-3.9" stroke="#b4b4b4" stroke-width="1.4"/>
</g>

<g id="taskbar-icons">
<defs>
<linearGradient id="cl" x1="0" y1="0" x2="0" y2="1"><stop offset="0" stop-color="#a9c4fb"/><stop offset="0.55" stop-color="#dbe7fd"/><stop offset="1" stop-color="#8fb2f4"/></linearGradient>
<linearGradient id="wn" x1="0" y1="0" x2="1" y2="1"><stop offset="0" stop-color="#7ad9ff"/><stop offset="1" stop-color="#0b86ec"/></linearGradient>
<linearGradient id="tv" x1="0" y1="0" x2="1" y2="1"><stop offset="0" stop-color="#ffffff"/><stop offset="1" stop-color="#c9c9c9"/></linearGradient>
<linearGradient id="fo" x1="0" y1="0" x2="0" y2="1"><stop offset="0" stop-color="#ffe07a"/><stop offset="1" stop-color="#f7b92b"/></linearGradient>
<linearGradient id="tg" x1="0" y1="0" x2="0" y2="1"><stop offset="0" stop-color="#3ab4ea"/><stop offset="1" stop-color="#1b8fc9"/></linearGradient>
<linearGradient id="sea" x1="0" y1="0" x2="1" y2="1"><stop offset="0" stop-color="#f0b6c8"/><stop offset="0.5" stop-color="#7aa6e8"/><stop offset="1" stop-color="#b58be0"/></linearGradient>
</defs>
<!-- weather cloud -->
<path d="M23.2 749C20.6 749 18.9 747.2 18.9 745C18.9 742.8 20.6 741.2 22.8 741.2C23.4 737 26.4 733.6 30.2 733.6C33.2 733.6 35.6 735.4 36.6 738.2C40.2 737.8 43.2 740.4 43.2 743.8C43.2 746.8 41 749 38.4 749Z" fill="url(#cl)"/>
<!-- windows -->
<path d="M361.9 732.6H372.7V743.6H361.9ZM373.9 732.6H385V743.6H373.9ZM361.9 744.8H372.7V755.8H361.9ZM373.9 744.8H385V755.8H373.9Z" fill="url(#wn)"/>
<!-- search pill -->
<rect x="398.4" y="728.2" width="219.4" height="31.2" rx="15.6" fill="#323232" stroke="#454545" stroke-width="1"/>
<circle cx="415.4" cy="742.6" r="5.2" fill="none" stroke="#e2e2e2" stroke-width="1.6"/>
<path d="M419.2 746.6L423.4 751" stroke="#e2e2e2" stroke-width="1.8" stroke-linecap="round"/>
<!-- search illustration -->
<g>
<path d="M566.4 748C569 744.4 576 743.6 583 745.4L594 750.6L590 757.4C582 758 572 756.6 567.4 753.6Z" fill="url(#sea)"/>
<circle cx="573.8" cy="736.4" r="3" fill="#ffd968"/>
<circle cx="586.6" cy="738.6" r="6" fill="none" stroke="#c45a8e" stroke-width="1.5"/>
<path d="M586.6 732.6V744.6M580.6 738.6H592.6M582.4 734.4L590.8 742.8M590.8 734.4L582.4 742.8" stroke="#9a4a86" stroke-width="0.8"/>
<path d="M590 744C594 738 598 736.6 602 738.4C605 739.8 608 738 612.6 737.2V746H606" fill="none" stroke="#f2c230" stroke-width="1.5"/>
<path d="M598 738V745M602 738.6V746M606 738.8V747M609.4 738V747" stroke="#e0aa20" stroke-width="0.8"/>
<path d="M583 745.4L611.6 744.6L612.6 748.6L596 757.6L588 757Z" fill="#b4694a"/>
<path d="M584 745.8L612 745" stroke="#e8c9a0" stroke-width="1.2"/>
<path d="M606 749V756M610 748V754" stroke="#7d4a3a" stroke-width="1.2"/>
</g>
<!-- task view -->
<rect x="630.2" y="739.8" width="17.6" height="14.6" rx="2" fill="#6e6e6e"/>
<rect x="636" y="732.8" width="18" height="16.2" rx="2" fill="url(#tv)"/>
<!-- folder -->
<path d="M673.8 735.4C673.8 734.2 674.6 733.4 675.8 733.4H682.4L685 736H696.4C697.6 736 698.4 736.8 698.4 738V741H673.8Z" fill="#e9a51c"/>
<rect x="673.8" y="737.8" width="24.6" height="17.2" rx="1.6" fill="url(#fo)"/>
<path d="M679.4 755V750.4C679.4 749.4 680.2 748.6 681.2 748.6H691C692 748.6 692.8 749.4 692.8 750.4V755Z" fill="#1f6fc4"/>
<rect x="682" y="751" width="8.2" height="1.8" rx="0.9" fill="#0e4f97"/>
<!-- Ai active -->
<rect x="710.6" y="724.4" width="39" height="39.4" rx="4" fill="#2b2b2b" stroke="#383838" stroke-width="1"/>
<rect x="719.2" y="733" width="21.2" height="21" rx="4" fill="#330000"/>
<rect x="722.2" y="760.2" width="15.4" height="2.8" rx="1.4" fill="#8e8e8e"/>
<!-- whatsapp -->
<path d="M772.8 734.2A10.4 10.4 0 1 1 767.4 753.6L762.6 755.2L764.2 750.6A10.4 10.4 0 0 1 772.8 734.2Z" fill="none" stroke="#25d366" stroke-width="2.4" stroke-linejoin="round"/>
<path d="M768.6 739.6C769.4 738.8 770.2 739 770.6 739.8L771.6 742C771.8 742.6 771.6 743 771.2 743.4L770.6 744.2C771.6 746 773 747.4 775 748.4L775.8 747.6C776.2 747.2 776.8 747 777.4 747.4L779.4 748.6C780 749 780 749.8 779.4 750.4C778.2 751.8 776.4 752 774.6 751.2C771.2 749.8 768.4 747 767.4 743.6C767 742 767.4 740.6 768.6 739.6Z" fill="#25d366"/>
<rect x="773.4" y="729" width="20.8" height="12.6" rx="6.3" fill="#4d4d4d"/>
<!-- chrome -->
<g>
<circle cx="817.8" cy="744" r="12" fill="#e33b2e"/>
<path d="M817.8 744L807.4 738A12 12 0 0 0 812.6 754.8L817.8 756Z" fill="#2da94f"/>
<path d="M817.8 744H829.8A12 12 0 0 1 812.4 754.7Z" fill="#fdd23b"/>
<path d="M817.8 744L807.4 738A12 12 0 0 1 829.2 740.2L817.8 740.2Z" fill="#e33b2e"/>
<circle cx="817.8" cy="744" r="5.7" fill="#fff"/>
<circle cx="817.8" cy="744" r="4.5" fill="#4a8af4"/>
<circle cx="827.2" cy="735.2" r="7.4" fill="#ea4b8b"/>
<rect x="815.2" y="760.2" width="5.4" height="2.8" rx="1.4" fill="#8e8e8e"/>
</g>
<!-- spotify -->
<circle cx="861.6" cy="744" r="11.8" fill="#1ed760"/>
<path d="M854.4 739.6C859.4 738 865.2 738.6 869.4 741" fill="none" stroke="#141414" stroke-width="2.3" stroke-linecap="round"/>
<path d="M855.2 743.8C859.4 742.6 864.2 743.2 867.8 745.2" fill="none" stroke="#141414" stroke-width="1.9" stroke-linecap="round"/>
<path d="M856 747.6C859.4 746.8 863 747.2 866 748.8" fill="none" stroke="#141414" stroke-width="1.6" stroke-linecap="round"/>
<rect x="859" y="760.2" width="5.4" height="2.8" rx="1.4" fill="#8e8e8e"/>
<!-- telegram -->
<circle cx="905.6" cy="744" r="11" fill="url(#tg)"/>
<path d="M899 744L912.4 738.4C913 738.2 913.4 738.6 913.2 739.4L911 750C910.8 750.8 910.2 751 909.6 750.6L906 748L904.2 749.8C904 750 903.6 750 903.6 749.6L903.4 746.6L910 740.6L901.8 745.8L899 744.9C898.4 744.7 898.4 744.3 899 744Z" fill="#fff"/>
<!-- animate -->
<rect x="939" y="733" width="21.4" height="21" rx="4" fill="#00005b"/>
<!-- vlc -->
<path d="M993.9 733C994.6 733 995.1 733.4 995.3 734L1000.6 750.4H987.2L992.5 734C992.7 733.4 993.2 733 993.9 733Z" fill="#ff8a00"/>
<path d="M990.9 739H996.9L998.3 743.2H989.5Z" fill="#f4f4f4"/>
<path d="M988.7 745.6H999.1L999.9 748H987.9Z" fill="#f4f4f4"/>
<path d="M985.4 750C985.6 749.2 986.2 748.8 987 748.8H1000.8C1001.6 748.8 1002.2 749.2 1002.4 750L1003.8 753.6C1004.2 754.6 1003.6 755.2 1002.6 755.2H985.2C984.2 755.2 983.6 754.6 984 753.6Z" fill="#f47a00"/>
<!-- tray -->
<path d="M1098.6 746.6L1104 741.2L1109.4 746.6" fill="none" stroke="#fff" stroke-width="1.5"/>
<path d="M1131.4 750.2C1129.2 750.2 1127.8 748.8 1127.8 747C1127.8 745.2 1129.2 744 1130.8 744C1131.2 741 1133.4 738.6 1136.4 738.6C1138.8 738.6 1140.6 740 1141.4 742C1143.2 742 1144.6 743.8 1144.6 745.8C1144.6 748.2 1142.8 750.2 1140.6 750.2Z" fill="#858585"/>
<path d="M1129.6 738L1143.4 751" stroke="#c8c8c8" stroke-width="1.2"/>
<g fill="none" stroke="#fff" stroke-width="1.2">
<path d="M1214.8 750.6A7.6 7.6 0 1 1 1218.6 745.4"/>
<path d="M1211.2 736.2C1207.4 739.6 1207.4 748 1211.2 751.2M1211.2 736.2C1213.6 738.2 1214.6 741 1214.6 743.4M1203.8 741.4H1218M1203.8 746.4H1211.6M1211.2 736.2V744"/>
<circle cx="1216.6" cy="748.8" r="3.4"/><path d="M1214.4 751.2L1218.8 746.4"/>
</g>
<path d="M1228.4 741.6H1231L1235 738V750.2L1231 746.6H1228.4Z" fill="none" stroke="#fff" stroke-width="1.2" stroke-linejoin="round"/>
<path d="M1237.6 741.4A3.6 3.6 0 0 1 1237.6 746.8M1239.8 739.2A6.6 6.6 0 0 1 1239.8 749M1242.2 737.2A9.6 9.6 0 0 1 1242.2 751" fill="none" stroke="#fff" stroke-width="1.2" stroke-linecap="round"/>
<path d="M1257.6 740H1263.6C1264.8 740 1265.6 740.8 1265.6 742V746.6C1265.6 747.8 1264.8 748.6 1263.6 748.6H1254.6C1253.4 748.6 1252.6 747.8 1252.6 746.6V744.6" fill="none" stroke="#fff" stroke-width="1.3" stroke-linecap="round"/>
<path d="M1266.4 742.6H1267C1267.6 742.6 1268 743 1268 743.6V745C1268 745.6 1267.6 746 1267 746H1266.4Z" fill="#fff"/>
<path d="M1255 737.2L1252.6 741.6H1254.4L1253.4 744.4L1256.8 740.2H1254.8L1256.2 737.2Z" fill="#fff"/>
</g>

</svg>
</body>
</html>
